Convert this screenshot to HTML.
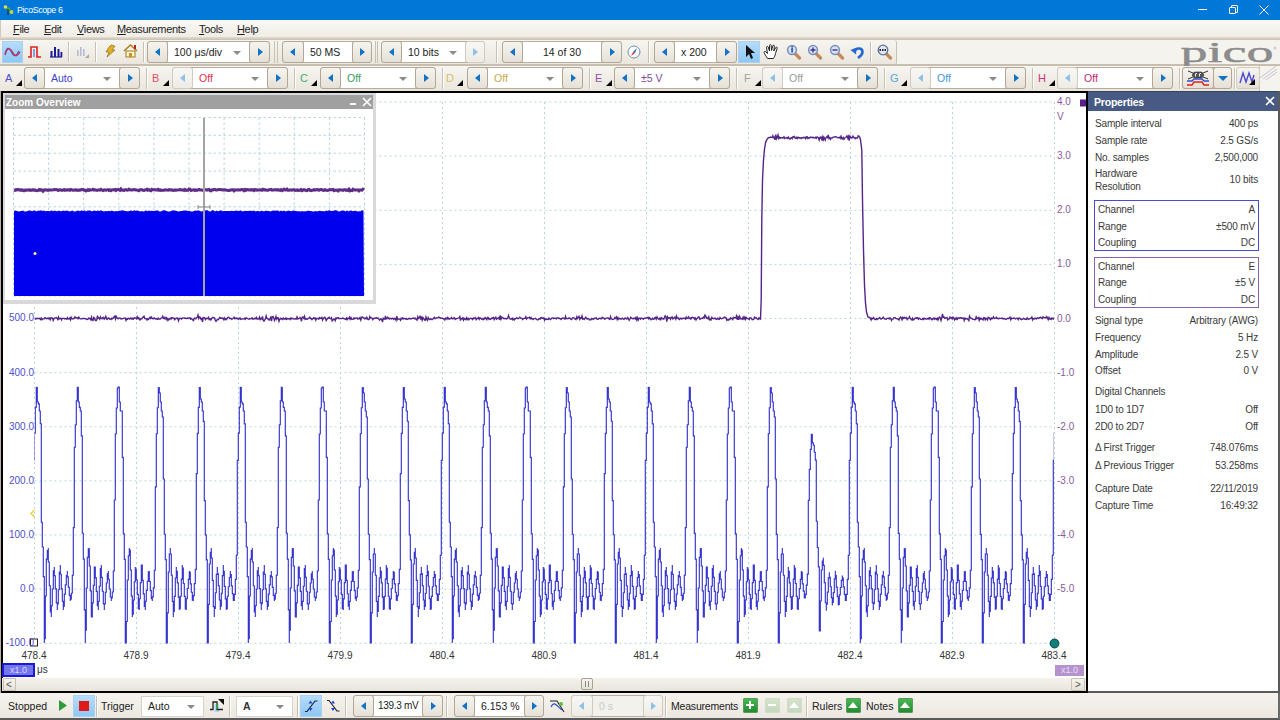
<!DOCTYPE html><html><head><meta charset="utf-8"><style>
*{box-sizing:border-box;margin:0;padding:0}
body{width:1280px;height:720px;overflow:hidden;position:relative;background:#F5F3EE;font-family:"Liberation Sans", sans-serif;font-size:10px;color:#222}
div,span,i{position:absolute;display:block}
.tb{background:linear-gradient(#F7F5F0,#EAE6DD)}
.grp{border:1px solid #B2A694;border-radius:4px;background:#EDE9E1}
.btn{border:1px solid #B2A694;border-radius:3px;background:linear-gradient(#F6F4EF,#E6E1D7)}
.btn.dis{background:linear-gradient(#F8F7F4,#EFECE6);border-color:#D2CABD}
.box{background:#fff;border-top:1px solid #B9AE9D;border-bottom:1px solid #B9AE9D;padding-left:6px;line-height:20px;font-size:10.5px;white-space:nowrap}
.al{left:50%;top:50%;margin-left:-3px;margin-top:-4px;width:0;height:0;border-top:4px solid transparent;border-bottom:4px solid transparent;border-right:5px solid #1173C5}
.ar{left:50%;top:50%;margin-left:-2px;margin-top:-4px;width:0;height:0;border-top:4px solid transparent;border-bottom:4px solid transparent;border-left:5px solid #1173C5}
.dis .al{border-right-color:#8FC0E6}
.dis .ar{border-left-color:#8FC0E6}
.dd{right:8px;top:9px;width:0;height:0;border-left:4.5px solid transparent;border-right:4.5px solid transparent;border-top:4.5px solid #8A8A8A}
.vsep{width:2px;border-left:1px solid #C9C0B2;border-right:1px solid #FFFFFF}
.mi{top:20px;line-height:18px;font-size:11px;color:#1E1E1E}
.mi u{text-decoration:underline}
.prow{left:1095px;width:163px;height:16px;line-height:16px;font-size:10px;color:#3A3A3A;letter-spacing:-0.15px}
.prow b{font-weight:normal;position:absolute;right:0;top:0}
.lab{font-size:10px;color:#5050C8}
.ylab{font-size:10px;color:#8A5A9A;left:1057px}
</style></head><body>
<div style="left:0;top:0;width:1280px;height:20px;background:#0078D7"></div>
<svg style="position:absolute;left:3px;top:4px" width="12" height="12"><circle cx="2.5" cy="3" r="1.8" fill="#f5e04a"/><circle cx="5.5" cy="5" r="1.8" fill="#44aa44"/><circle cx="8.5" cy="8" r="2" fill="#c8d040"/><rect x="4.5" y="5" width="1" height="6" fill="#222"/></svg>
<div style="left:17px;top:3px;font-size:8.8px;color:#fff;line-height:14px;letter-spacing:-0.35px">PicoScope 6</div>
<div style="left:1198px;top:9px;width:9px;height:1px;background:#fff"></div>
<div style="left:1231px;top:5px;width:7px;height:8px;border:1px solid #fff;border-radius:1px"></div><div style="left:1229px;top:7px;width:7px;height:7px;border:1px solid #fff;background:#0078D7;border-radius:1px"></div>
<svg style="position:absolute;left:1259px;top:5px" width="10" height="10"><path d="M0.5,0.5 L9.5,9.5 M9.5,0.5 L0.5,9.5" stroke="#fff" stroke-width="1"/></svg>
<div style="left:0;top:20px;width:1280px;height:18px;background:linear-gradient(#FAF8F4,#EFECE5);border-left:1px solid #CFC8BC"></div>
<div style="left:0;top:37px;width:1280px;height:3px;background:linear-gradient(#E2DCD2,#C9BFB1)"></div>
<div class="mi" style="left:13px;letter-spacing:-0.35px"><u>F</u>ile</div>
<div class="mi" style="left:44px;letter-spacing:-0.35px"><u>E</u>dit</div>
<div class="mi" style="left:77px;letter-spacing:-0.35px"><u>V</u>iews</div>
<div class="mi" style="left:117px;letter-spacing:-0.35px"><u>M</u>easurements</div>
<div class="mi" style="left:199px;letter-spacing:-0.35px"><u>T</u>ools</div>
<div class="mi" style="left:237px;letter-spacing:-0.35px"><u>H</u>elp</div>
<div class="tb" style="left:0;top:40px;width:897px;height:25px;border-right:1px solid #C9C0B2;border-radius:0 3px 3px 0"></div>
<div style="left:0;top:64px;width:1280px;height:2px;background:#C8BEB0"></div>
<div style="left:2px;top:41px;width:21px;height:22px;background:linear-gradient(#B5DCFB,#8EC8F5);border:1px solid #A9D2F2"></div>
<svg style="position:absolute;left:4px;top:46px" width="17" height="12"><path d="M1,8 C3,1 5,1 7.5,6 C10,11 12,11 15,5" stroke="#4848C8" stroke-width="1.3" fill="none"/><path d="M1,9 C3,2 6,1 8.5,6 C11,11 13,11 16,6" stroke="#D83050" stroke-width="1.3" fill="none"/></svg>
<svg style="position:absolute;left:27px;top:46px" width="15" height="12"><path d="M1,11 L4,11 L4,1 L10,1 L10,11 L14,11" stroke="#E02020" stroke-width="1.6" fill="none"/><rect x="6" y="3" width="2" height="8" fill="#80A0E0"/></svg>
<svg style="position:absolute;left:49px;top:45px" width="14" height="13"><path d="M1,12 H13" stroke="#1a1a9a" stroke-width="1.2"/><rect x="1.5" y="6" width="2" height="6" fill="#1a1a9a"/><rect x="5" y="2" width="2" height="10" fill="#1a1a9a"/><rect x="8.5" y="4" width="2" height="8" fill="#1a1a9a"/><rect x="11.5" y="7" width="1.8" height="5" fill="#1a1a9a"/></svg>
<div class="vsep" style="left:68px;top:42px;height:20px"></div>
<svg style="position:absolute;left:76px;top:45px" width="14" height="14"><rect x="1" y="5" width="1.6" height="6" fill="#B8B8D8"/><rect x="4" y="2" width="1.6" height="9" fill="#B8B8D8"/><rect x="7" y="4" width="1.6" height="7" fill="#B8B8D8"/><path d="M13,9 L13,13 L9,13Z" fill="#A8A8A8"/></svg>
<div class="vsep" style="left:95px;top:42px;height:20px"></div>
<svg style="position:absolute;left:104px;top:44px" width="12" height="14"><path d="M7,1 L11,2 L8,6 L11,6 L3,13 L5,8 L2,8 L5,3Z" fill="#E0B020" stroke="#806010" stroke-width="0.6"/></svg>
<svg style="position:absolute;left:123px;top:44px" width="15" height="14"><path d="M1,7 L7.5,1 L14,7" stroke="#B08020" stroke-width="1.6" fill="none"/><rect x="3" y="7" width="9" height="6" fill="#FFF6D0" stroke="#A07820" stroke-width="1"/><rect x="6" y="9" width="3" height="4" fill="#D09020"/><rect x="11" y="1" width="2" height="4" fill="#C02020"/></svg>
<div class="vsep" style="left:143px;top:42px;height:20px"></div>
<div class="grp" style="left:147px;top:41px;width:123px;height:22px"></div><div class="btn" style="left:147px;top:41px;width:21px;height:22px"><i class="al"></i></div><div class="box" style="left:168px;top:41px;width:81px;height:22px;color:#222;">100 μs/div<i class="dd"></i></div><div class="btn" style="left:249px;top:41px;width:21px;height:22px"><i class="ar"></i></div>
<div style="left:274px;top:41px;width:4px;height:22px;border-left:1px solid #C9C0B2;border-right:1px solid #C9C0B2"></div>
<div class="grp" style="left:282px;top:41px;width:90px;height:22px"></div><div class="btn" style="left:282px;top:41px;width:22px;height:22px"><i class="al"></i></div><div class="box" style="left:304px;top:41px;width:48px;height:22px;color:#222;">50 MS</div><div class="btn" style="left:352px;top:41px;width:20px;height:22px"><i class="ar"></i></div>
<div style="left:375px;top:41px;width:3px;height:22px;border-left:1px solid #C9C0B2;border-right:1px solid #C9C0B2"></div>
<div class="grp" style="left:381px;top:41px;width:104px;height:22px"></div><div class="btn" style="left:381px;top:41px;width:21px;height:22px"><i class="al"></i></div><div class="box" style="left:402px;top:41px;width:63px;height:22px;color:#222;">10 bits<i class="dd"></i></div><div class="btn dis" style="left:465px;top:41px;width:20px;height:22px"><i class="ar"></i></div>
<div class="vsep" style="left:496px;top:41px;height:22px"></div>
<div class="grp" style="left:502px;top:41px;width:120px;height:22px"></div><div class="btn" style="left:502px;top:41px;width:21px;height:22px"><i class="al"></i></div><div class="box" style="left:523px;top:41px;width:78px;height:22px;color:#222;text-align:center;padding-left:0;">14 of 30</div><div class="btn" style="left:601px;top:41px;width:21px;height:22px"><i class="ar"></i></div>
<svg style="position:absolute;left:627px;top:45px" width="14" height="14"><circle cx="7" cy="7" r="6" fill="#fff" stroke="#7090B0" stroke-width="1"/><path d="M10,3 L6,7 L8,8Z" fill="#2060D0"/><path d="M4,11 L6,7 L8,8Z" fill="#E03030"/></svg>
<div class="vsep" style="left:648px;top:41px;height:22px"></div>
<div class="grp" style="left:654px;top:41px;width:83px;height:22px"></div><div class="btn" style="left:654px;top:41px;width:21px;height:22px"><i class="al"></i></div><div class="box" style="left:675px;top:41px;width:41px;height:22px;color:#222;">x 200</div><div class="btn" style="left:716px;top:41px;width:21px;height:22px"><i class="ar"></i></div>
<div style="left:738px;top:41px;width:22px;height:22px;background:linear-gradient(#B5DCFB,#8EC8F5);border:1px solid #A9D2F2"></div>
<svg style="position:absolute;left:744px;top:44px" width="12" height="16"><path d="M2,1 L2,13 L5,10 L7,15 L9,14 L7,9 L11,9Z" fill="#111"/></svg>
<svg style="position:absolute;left:763px;top:43px" width="17" height="17"><path d="M4.5,15.5 C3,13 1.5,11 1,9.5 C0.8,8.5 2,8 3,9 L4.5,10.5 L3.5,4.5 C3.3,3.5 4.8,3 5.2,4 L6.5,8 L6.5,2.5 C6.5,1.3 8.2,1.3 8.2,2.5 L8.5,7.5 L9.8,2.8 C10.1,1.8 11.6,2 11.4,3.2 L10.8,8 L12.8,4.5 C13.3,3.6 14.6,4.1 14.2,5.2 L12.5,10.5 C12,13 11,14.5 10.5,15.5Z" stroke="#222" stroke-width="1" fill="#fff" stroke-linejoin="round"/></svg>
<svg style="position:absolute;left:786px;top:44px" width="16" height="16"><path d="M9,9.5 L13.5,14" stroke="#C48A5C" stroke-width="3.2" stroke-linecap="round"/><circle cx="6" cy="6" r="4.4" fill="#D8E2F0" stroke="#7890B8" stroke-width="1.5"/><rect x="5.3" y="4" width="1.6" height="4.5" fill="#2050B0"/><circle cx="6.1" cy="2.8" r="0.9" fill="#2050B0"/></svg>
<svg style="position:absolute;left:807px;top:44px" width="16" height="16"><path d="M9,9.5 L13.5,14" stroke="#C48A5C" stroke-width="3.2" stroke-linecap="round"/><circle cx="6" cy="6" r="4.4" fill="#D8E2F0" stroke="#7890B8" stroke-width="1.5"/><path d="M3.5,6 H8.5 M6,3.5 V8.5" stroke="#4030A0" stroke-width="1.4"/></svg>
<svg style="position:absolute;left:829px;top:44px" width="16" height="16"><path d="M9,9.5 L13.5,14" stroke="#C48A5C" stroke-width="3.2" stroke-linecap="round"/><circle cx="6" cy="6" r="4.4" fill="#D8E2F0" stroke="#7890B8" stroke-width="1.5"/><path d="M3.5,6 H8.5" stroke="#4030A0" stroke-width="1.4"/></svg>
<svg style="position:absolute;left:850px;top:45px" width="15" height="14"><path d="M4.5,6.5 C6,2.5 12.5,2.5 12.5,7 C12.5,10 10,11.5 8,13" stroke="#2468D8" stroke-width="2.6" fill="none"/><path d="M0.5,5 L6.5,2.5 L6,9.5Z" fill="#2468D8"/></svg>
<div class="vsep" style="left:870px;top:42px;height:20px"></div>
<svg style="position:absolute;left:877px;top:44px" width="16" height="16"><path d="M9,9.5 L13.5,14" stroke="#C48A5C" stroke-width="3.2" stroke-linecap="round"/><circle cx="6" cy="6" r="4.8" fill="#DCE8F8" stroke="#5A7090" stroke-width="1.3"/><path d="M2.5,6 H9.5" stroke="#223" stroke-width="2" stroke-dasharray="1.5,1"/></svg>
<svg style="position:absolute;left:1170px;top:36px" width="110" height="32"><text x="10.5" y="25.5" font-family="Liberation Serif" font-size="29" fill="#8C8C8C" stroke="#8C8C8C" stroke-width="0.45" textLength="93" lengthAdjust="spacingAndGlyphs">pico</text><circle cx="105" cy="12" r="1.5" fill="#ccc"/></svg>
<svg style="position:absolute;left:1258px;top:64px" width="20" height="18"><path d="M2,14 L18,2 M5,15 L19,5 M8,16 L19,8" stroke="#B8B8C8" stroke-width="0.8"/></svg>
<div class="tb" style="left:0;top:66px;width:1260px;height:25px;border-right:1px solid #C9C0B2"></div>
<div style="left:5px;top:71px;font-size:11px;color:#5050D0;line-height:14px">A</div>
<svg style="position:absolute;left:16px;top:80px" width="6" height="6"><path d="M6,0 L6,6 L0,6Z" fill="#000"/></svg>
<div class="grp" style="left:24px;top:67px;width:116px;height:22px"></div><div class="btn" style="left:24px;top:67px;width:21px;height:22px"><i class="al"></i></div><div class="box" style="left:45px;top:67px;width:74px;height:22px;color:#4040C0;">Auto<i class="dd"></i></div><div class="btn" style="left:119px;top:67px;width:21px;height:22px"><i class="ar"></i></div>
<div class="vsep" style="left:146px;top:68px;height:21px"></div>
<div style="left:152px;top:71px;font-size:11px;color:#E05060;line-height:14px">B</div>
<svg style="position:absolute;left:163px;top:80px" width="6" height="6"><path d="M6,0 L6,6 L0,6Z" fill="#000"/></svg>
<div class="grp" style="left:172px;top:67px;width:116px;height:22px"></div><div class="btn dis" style="left:172px;top:67px;width:21px;height:22px"><i class="al"></i></div><div class="box" style="left:193px;top:67px;width:74px;height:22px;color:#E03050;">Off<i class="dd"></i></div><div class="btn" style="left:267px;top:67px;width:21px;height:22px"><i class="ar"></i></div>
<div class="vsep" style="left:294px;top:68px;height:21px"></div>
<div style="left:300px;top:71px;font-size:11px;color:#40B070;line-height:14px">C</div>
<svg style="position:absolute;left:311px;top:80px" width="6" height="6"><path d="M6,0 L6,6 L0,6Z" fill="#000"/></svg>
<div class="grp" style="left:320px;top:67px;width:116px;height:22px"></div><div class="btn" style="left:320px;top:67px;width:21px;height:22px"><i class="al"></i></div><div class="box" style="left:341px;top:67px;width:74px;height:22px;color:#30A060;">Off<i class="dd"></i></div><div class="btn" style="left:415px;top:67px;width:21px;height:22px"><i class="ar"></i></div>
<div class="vsep" style="left:442px;top:68px;height:21px"></div>
<div style="left:446px;top:71px;font-size:11px;color:#D8C060;line-height:14px">D</div>
<svg style="position:absolute;left:457px;top:80px" width="6" height="6"><path d="M6,0 L6,6 L0,6Z" fill="#000"/></svg>
<div class="grp" style="left:467px;top:67px;width:116px;height:22px"></div><div class="btn" style="left:467px;top:67px;width:21px;height:22px"><i class="al"></i></div><div class="box" style="left:488px;top:67px;width:74px;height:22px;color:#C8A850;">Off<i class="dd"></i></div><div class="btn" style="left:562px;top:67px;width:21px;height:22px"><i class="ar"></i></div>
<div class="vsep" style="left:589px;top:68px;height:21px"></div>
<div style="left:595px;top:71px;font-size:11px;color:#9050B0;line-height:14px">E</div>
<svg style="position:absolute;left:606px;top:80px" width="6" height="6"><path d="M6,0 L6,6 L0,6Z" fill="#000"/></svg>
<div class="grp" style="left:614px;top:67px;width:116px;height:22px"></div><div class="btn" style="left:614px;top:67px;width:21px;height:22px"><i class="al"></i></div><div class="box" style="left:635px;top:67px;width:74px;height:22px;color:#7A4A9A;">±5 V<i class="dd"></i></div><div class="btn" style="left:709px;top:67px;width:21px;height:22px"><i class="ar"></i></div>
<div class="vsep" style="left:736px;top:68px;height:21px"></div>
<div style="left:744px;top:71px;font-size:11px;color:#A0A0A0;line-height:14px">F</div>
<svg style="position:absolute;left:755px;top:80px" width="6" height="6"><path d="M6,0 L6,6 L0,6Z" fill="#000"/></svg>
<div class="grp" style="left:762px;top:67px;width:116px;height:22px"></div><div class="btn dis" style="left:762px;top:67px;width:21px;height:22px"><i class="al"></i></div><div class="box" style="left:783px;top:67px;width:74px;height:22px;color:#9A9A9A;">Off<i class="dd"></i></div><div class="btn" style="left:857px;top:67px;width:21px;height:22px"><i class="ar"></i></div>
<div class="vsep" style="left:884px;top:68px;height:21px"></div>
<div style="left:890px;top:71px;font-size:11px;color:#50A8E0;line-height:14px">G</div>
<svg style="position:absolute;left:901px;top:80px" width="6" height="6"><path d="M6,0 L6,6 L0,6Z" fill="#000"/></svg>
<div class="grp" style="left:910px;top:67px;width:116px;height:22px"></div><div class="btn dis" style="left:910px;top:67px;width:21px;height:22px"><i class="al"></i></div><div class="box" style="left:931px;top:67px;width:74px;height:22px;color:#4098D8;">Off<i class="dd"></i></div><div class="btn" style="left:1005px;top:67px;width:21px;height:22px"><i class="ar"></i></div>
<div class="vsep" style="left:1032px;top:68px;height:21px"></div>
<div style="left:1038px;top:71px;font-size:11px;color:#D03080;line-height:14px">H</div>
<svg style="position:absolute;left:1049px;top:80px" width="6" height="6"><path d="M6,0 L6,6 L0,6Z" fill="#000"/></svg>
<div class="grp" style="left:1057px;top:67px;width:116px;height:22px"></div><div class="btn dis" style="left:1057px;top:67px;width:21px;height:22px"><i class="al"></i></div><div class="box" style="left:1078px;top:67px;width:74px;height:22px;color:#C02870;">Off<i class="dd"></i></div><div class="btn" style="left:1152px;top:67px;width:21px;height:22px"><i class="ar"></i></div>
<div class="vsep" style="left:1179px;top:68px;height:21px"></div>
<div class="grp" style="left:1182px;top:67px;width:50px;height:22px"></div>
<div class="btn" style="left:1182px;top:67px;width:32px;height:22px"></div>
<div class="btn" style="left:1213px;top:67px;width:19px;height:22px"><i style="left:4px;top:8px;width:0;height:0;border-left:5px solid transparent;border-right:5px solid transparent;border-top:5px solid #1173C5"></i></div>
<svg style="position:absolute;left:1186px;top:70px" width="25" height="16"><path d="M2,1 L22,9 M22,1 L2,9" stroke="#333" stroke-width="1"/><path d="M6,5 L8.5,2 L15.5,2 L18,5 L15.5,8 L8.5,8Z" fill="#555" stroke="#222" stroke-width="0.6"/><path d="M9.5,3.5 V6.5 M10,3.5 H11 M13.5,3.5 V6.5 M14,3.5 H15" stroke="#fff" stroke-width="0.9"/><path d="M1,11 L6,11 L8,9 L16,9 L18,11 L23,11" stroke="#3050D0" stroke-width="1.4" fill="none"/><path d="M1,15 L6,15 L8,12 L16,12 L18,15 L23,15" stroke="#E02020" stroke-width="1.4" fill="none"/></svg>
<div class="vsep" style="left:1234px;top:68px;height:21px"></div>
<div class="btn" style="left:1236px;top:67px;width:24px;height:22px;border-color:#D2CABD"></div>
<svg style="position:absolute;left:1239px;top:71px" width="18" height="15"><path d="M1,12 L4,2 L7,11 L10,2 L13,11 L15,4" stroke="#4A4ACF" stroke-width="1.4" fill="none"/><path d="M16,8 L16,14 L10,14Z" fill="#000"/></svg>
<div style="left:0;top:91px;width:1088px;height:602px;background:#000;border-left:1px solid #B8B0A4"></div>
<div style="left:3px;top:93px;width:1083px;height:598px;background:#fff"></div>
<div style="left:2px;top:678px;width:1084px;height:13px;background:linear-gradient(#F4F2EC,#E9E5DC)"></div>
<div class="btn" style="left:3px;top:678px;width:13px;height:13px;border-color:#C9C0B2;border-radius:1px"></div><div style="left:6px;top:678px;font-size:10px;color:#555;line-height:13px">&lt;</div>
<div class="btn" style="left:1071px;top:678px;width:14px;height:13px;border-color:#C9C0B2;border-radius:1px"></div><div style="left:1075px;top:678px;font-size:10px;color:#555;line-height:13px">&gt;</div>
<div class="btn" style="left:581px;top:678px;width:12px;height:12px;border-color:#A9A090;border-radius:2px"></div><div style="left:585px;top:681px;width:4px;height:6px;border-left:1px solid #888;border-right:1px solid #888"></div>
<svg style="position:absolute;left:0;top:0" width="1088" height="692">
<defs><clipPath id="pc"><rect x="34.5" y="95" width="1019.5" height="549"/></clipPath></defs>
<path d="M34.5,102 V643.3 M136.5,102 V643.3 M238.5,102 V643.3 M340.5,102 V643.3 M442.5,102 V643.3 M544.5,102 V643.3 M646.5,102 V643.3 M748.5,102 V643.3 M850.5,102 V643.3 M952.5,102 V643.3 M1054.5,102 V643.3 M34.5,102.0 H1054.5 M34.5,156.1 H1054.5 M34.5,210.3 H1054.5 M34.5,264.4 H1054.5 M34.5,318.5 H1054.5 M34.5,372.7 H1054.5 M34.5,426.8 H1054.5 M34.5,480.9 H1054.5 M34.5,535.0 H1054.5 M34.5,589.2 H1054.5 M34.5,643.3 H1054.5" stroke="#B9D5DC" stroke-width="1" stroke-dasharray="2,3" fill="none"/>
<g clip-path="url(#pc)">
<path d="M30.3,600.4 V600.4 V594.4 V594.4 H31.3 V594.4 V579.4 V579.4 H32.3 V579.4 V555.2 V555.2 H33.3 V555.2 V460.4 V460.4 H34.3 V460.4 V433.1 V433.1 H35.3 V433.1 V407.1 V407.1 H36.3 V407.1 V387.4 V387.4 H37.3 V387.0 V402.0 V402.0 H38.3 V402.0 V403.8 V403.8 H39.3 V403.8 V411.0 V411.0 H40.3 V411.0 V423.7 V423.7 H41.3 V423.7 V522.2 V522.2 H42.3 V522.2 V547.0 V547.0 H43.3 V547.0 V576.6 V576.6 H44.3 V576.6 V643.0 V638.7 H45.3 V638.7 V596.0 V596.0 H46.3 V596.0 V559.1 V559.1 H47.3 V559.1 V550.6 V550.6 H48.3 V548.0 V562.0 V562.0 H49.3 V562.0 V585.7 V585.7 H50.3 V585.7 V611.8 V611.8 H51.3 V617.0 V605.7 V605.7 H52.3 V605.7 V589.0 V589.0 H53.3 V589.0 V570.7 V570.7 H54.3 V567.0 V575.7 V575.7 H55.3 V575.7 V588.6 V588.6 H56.3 V588.6 V602.9 V602.9 H57.3 V602.9 V610.0 V603.8 H58.3 V603.8 V589.7 V589.7 H59.3 V589.7 V572.1 V572.1 H60.3 V565.0 V574.2 V574.2 H61.3 V574.2 V588.8 V588.8 H62.3 V588.8 V601.2 V601.2 H63.3 V601.2 V610.0 V606.2 H64.3 V606.2 V594.1 V594.1 H65.3 V594.1 V584.8 V584.8 H66.3 V584.8 V575.6 V575.6 H67.3 V571.0 V576.8 V576.8 H68.3 V576.8 V587.4 V587.4 H69.3 V587.4 V595.4 V595.4 H70.3 V595.4 V601.0 V599.2 H71.3 V599.2 V593.2 V593.2 H72.3 V593.2 V575.2 V575.2 H73.3 V575.2 V527.6 V527.6 H74.3 V527.6 V447.2 V447.2 H75.3 V447.2 V424.7 V424.7 H76.3 V424.7 V400.7 V400.7 H77.3 V400.7 V387.2 V387.2 H78.3 V387.0 V402.0 V402.0 H79.3 V402.0 V407.4 V407.4 H80.3 V407.4 V411.0 V411.0 H81.3 V411.0 V435.8 V435.8 H82.3 V435.8 V533.2 V533.2 H83.3 V533.2 V559.1 V559.1 H84.3 V559.1 V609.8 V609.8 H85.3 V609.8 V643.0 V630.1 H86.3 V630.1 V588.0 V588.0 H87.3 V588.0 V557.4 V557.4 H88.3 V557.4 V548.9 V548.9 H89.3 V548.0 V566.0 V566.0 H90.3 V566.0 V590.9 V590.9 H91.3 V590.9 V617.0 V617.0 H92.3 V617.0 V602.8 V602.8 H93.3 V602.8 V585.3 V585.3 H94.3 V585.3 V567.0 V567.0 H95.3 V567.0 V577.8 V577.8 H96.3 V577.8 V591.4 V591.4 H97.3 V591.4 V605.7 V605.7 H98.3 V610.0 V601.2 V601.2 H99.3 V601.2 V586.2 V586.2 H100.3 V586.2 V568.5 V568.5 H101.3 V565.0 V577.3 V577.3 H102.3 V577.3 V591.2 V591.2 H103.3 V591.2 V603.8 V603.8 H104.3 V610.0 V603.8 V603.8 H105.3 V603.8 V592.2 V592.2 H106.3 V592.2 V583.0 V583.0 H107.3 V583.0 V573.8 V573.8 H108.3 V571.0 V579.2 V579.2 H109.3 V579.2 V589.0 V589.0 H110.3 V589.0 V597.0 V597.0 H111.3 V597.0 V601.0 V598.0 H112.3 V598.0 V592.0 V592.0 H113.3 V592.0 V571.0 V571.0 H114.3 V571.0 V500.0 V500.0 H115.3 V500.0 V434.0 V434.0 H116.3 V434.0 V408.0 V408.0 H117.3 V408.0 V388.0 V388.0 H118.3 V388.0 V387.0 V387.0 H119.3 V387.0 V402.0 V402.0 H120.3 V402.0 V411.0 V411.0 H121.3 V411.0 V411.0 V411.0 H122.3 V411.0 V457.4 V457.4 H123.3 V457.4 V533.8 V533.8 H124.3 V533.8 V559.4 V559.4 H125.3 V559.4 V643.0 V643.0 H126.3 V643.0 V621.5 V621.5 H127.3 V621.5 V580.0 V580.0 H128.3 V580.0 V555.7 V555.7 H129.3 V555.7 V548.0 V550.0 H130.3 V550.0 V570.0 V570.0 H131.3 V570.0 V596.1 V596.1 H132.3 V596.1 V617.0 V614.2 H133.3 V614.2 V600.0 V600.0 H134.3 V600.0 V581.7 V581.7 H135.3 V581.7 V567.0 V569.2 H136.3 V569.2 V580.0 V580.0 H137.3 V580.0 V594.3 V594.3 H138.3 V594.3 V608.6 V608.6 H139.3 V610.0 V598.7 V598.7 H140.3 V598.7 V582.6 V582.6 H141.3 V582.6 V565.0 V565.0 H142.3 V565.0 V580.4 V580.4 H143.3 V580.4 V593.8 V593.8 H144.3 V593.8 V606.3 V606.3 H145.3 V610.0 V601.2 V601.2 H146.3 V601.2 V590.4 V590.4 H147.3 V590.4 V581.2 V581.2 H148.3 V581.2 V571.9 V571.9 H149.3 V571.0 V581.5 V581.5 H150.3 V581.5 V590.6 V590.6 H151.3 V590.6 V598.6 V598.6 H152.3 V601.0 V596.8 V596.8 H153.3 V596.8 V587.8 V587.8 H154.3 V587.8 V570.2 V570.2 H155.3 V570.2 V486.8 V486.8 H156.3 V486.8 V433.7 V433.7 H157.3 V433.7 V407.7 V407.7 H158.3 V407.7 V387.8 V387.8 H159.3 V387.0 V393.0 V393.0 H160.3 V393.0 V402.0 V402.0 H161.3 V402.0 V411.0 V411.0 H162.3 V411.0 V417.0 V417.0 H163.3 V417.0 V479.0 V479.0 H164.3 V479.0 V534.2 V534.2 H165.3 V534.2 V559.6 V559.6 H166.3 V559.6 V643.0 V643.0 H167.3 V643.0 V612.9 V612.9 H168.3 V612.9 V572.0 V572.0 H169.3 V572.0 V554.0 V554.0 H170.3 V548.0 V554.0 V554.0 H171.3 V554.0 V575.2 V575.2 H172.3 V575.2 V601.3 V601.3 H173.3 V601.3 V617.0 V611.3 H174.3 V611.3 V596.3 V596.3 H175.3 V596.3 V578.0 V578.0 H176.3 V578.0 V567.0 V571.3 H177.3 V571.3 V582.9 V582.9 H178.3 V582.9 V597.1 V597.1 H179.3 V597.1 V610.0 V608.7 H180.3 V608.7 V596.2 V596.2 H181.3 V596.2 V579.1 V579.1 H182.3 V579.1 V565.0 V568.1 H183.3 V568.1 V583.5 V583.5 H184.3 V583.5 V596.3 V596.3 H185.3 V596.3 V608.8 V608.8 H186.3 V610.0 V598.7 V598.7 H187.3 V598.7 V588.5 V588.5 H188.3 V588.5 V579.3 V579.3 H189.3 V579.3 V571.0 V572.2 H190.3 V572.2 V583.8 V583.8 H191.3 V583.8 V592.2 V592.2 H192.3 V592.2 V600.2 V600.2 H193.3 V601.0 V595.6 V595.6 H194.3 V595.6 V583.6 V583.6 H195.3 V583.6 V569.4 V569.4 H196.3 V569.4 V473.6 V473.6 H197.3 V473.6 V433.4 V433.4 H198.3 V433.4 V407.4 V407.4 H199.3 V407.4 V387.6 V387.6 H200.3 V387.0 V399.0 V399.0 H201.3 V399.0 V402.0 V402.0 H202.3 V402.0 V411.0 V411.0 H203.3 V411.0 V421.3 V421.3 H204.3 V421.3 V500.6 V500.6 H205.3 V500.6 V534.8 V534.8 H206.3 V534.8 V559.9 V559.9 H207.3 V559.9 V643.0 V643.0 H208.3 V643.0 V604.3 V604.3 H209.3 V604.3 V564.0 V564.0 H210.3 V564.0 V552.3 V552.3 H211.3 V548.0 V558.0 V558.0 H212.3 V558.0 V580.4 V580.4 H213.3 V580.4 V606.6 V606.6 H214.3 V606.6 V617.0 V608.5 H215.3 V608.5 V592.7 V592.7 H216.3 V592.7 V574.3 V574.3 H217.3 V574.3 V567.0 V573.5 H218.3 V573.5 V585.7 V585.7 H219.3 V585.7 V600.0 V600.0 H220.3 V600.0 V610.0 V606.2 H221.3 V606.2 V593.2 V593.2 H222.3 V593.2 V575.6 V575.6 H223.3 V575.6 V565.0 V571.2 H224.3 V571.2 V586.3 V586.3 H225.3 V586.3 V598.8 V598.8 H226.3 V598.8 V610.0 V608.7 H227.3 V608.7 V596.2 V596.2 H228.3 V596.2 V586.7 V586.7 H229.3 V586.7 V577.5 V577.5 H230.3 V577.5 V571.0 V574.5 H231.3 V574.5 V585.8 V585.8 H232.3 V585.8 V593.8 V593.8 H233.3 V593.8 V601.0 V600.4 H234.3 V600.4 V594.4 V594.4 H235.3 V594.4 V579.4 V579.4 H236.3 V579.4 V555.2 V555.2 H237.3 V555.2 V460.4 V460.4 H238.3 V460.4 V433.1 V433.1 H239.3 V433.1 V407.1 V407.1 H240.3 V407.1 V387.4 V387.4 H241.3 V387.0 V402.0 V402.0 H242.3 V402.0 V403.8 V403.8 H243.3 V403.8 V411.0 V411.0 H244.3 V411.0 V423.8 V423.8 H245.3 V423.8 V522.2 V522.2 H246.3 V522.2 V547.0 V547.0 H247.3 V547.0 V576.6 V576.6 H248.3 V576.6 V643.0 V638.7 H249.3 V638.7 V596.0 V596.0 H250.3 V596.0 V559.1 V559.1 H251.3 V559.1 V550.6 V550.6 H252.3 V548.0 V562.0 V562.0 H253.3 V562.0 V585.7 V585.7 H254.3 V585.7 V611.8 V611.8 H255.3 V617.0 V605.7 V605.7 H256.3 V605.7 V589.0 V589.0 H257.3 V589.0 V570.7 V570.7 H258.3 V567.0 V575.7 V575.7 H259.3 V575.7 V588.6 V588.6 H260.3 V588.6 V602.9 V602.9 H261.3 V602.9 V610.0 V603.7 H262.3 V603.7 V589.7 V589.7 H263.3 V589.7 V572.1 V572.1 H264.3 V565.0 V574.2 V574.2 H265.3 V574.2 V588.8 V588.8 H266.3 V588.8 V601.3 V601.3 H267.3 V601.3 V610.0 V606.2 H268.3 V606.2 V594.1 V594.1 H269.3 V594.1 V584.8 V584.8 H270.3 V584.8 V575.6 V575.6 H271.3 V571.0 V576.8 V576.8 H272.3 V576.8 V587.4 V587.4 H273.3 V587.4 V595.4 V595.4 H274.3 V595.4 V601.0 V599.2 H275.3 V599.2 V593.2 V593.2 H276.3 V593.2 V575.2 V575.2 H277.3 V575.2 V527.6 V527.6 H278.3 V527.6 V447.2 V447.2 H279.3 V447.2 V424.7 V424.7 H280.3 V424.7 V400.7 V400.7 H281.3 V400.7 V387.2 V387.2 H282.3 V387.0 V402.0 V402.0 H283.3 V402.0 V407.4 V407.4 H284.3 V407.4 V411.0 V411.0 H285.3 V411.0 V435.8 V435.8 H286.3 V435.8 V533.2 V533.2 H287.3 V533.2 V559.1 V559.1 H288.3 V559.1 V609.8 V609.8 H289.3 V609.8 V643.0 V630.1 H290.3 V630.1 V588.0 V588.0 H291.3 V588.0 V557.4 V557.4 H292.3 V557.4 V548.9 V548.9 H293.3 V548.0 V566.0 V566.0 H294.3 V566.0 V590.9 V590.9 H295.3 V590.9 V617.0 V617.0 H296.3 V617.0 V602.8 V602.8 H297.3 V602.8 V585.3 V585.3 H298.3 V585.3 V567.0 V567.0 H299.3 V567.0 V577.8 V577.8 H300.3 V577.8 V591.4 V591.4 H301.3 V591.4 V605.7 V605.7 H302.3 V610.0 V601.3 V601.3 H303.3 V601.3 V586.2 V586.2 H304.3 V586.2 V568.5 V568.5 H305.3 V565.0 V577.3 V577.3 H306.3 V577.3 V591.2 V591.2 H307.3 V591.2 V603.8 V603.8 H308.3 V610.0 V603.7 V603.7 H309.3 V603.7 V592.2 V592.2 H310.3 V592.2 V583.0 V583.0 H311.3 V583.0 V573.8 V573.8 H312.3 V571.0 V579.2 V579.2 H313.3 V579.2 V589.0 V589.0 H314.3 V589.0 V597.0 V597.0 H315.3 V597.0 V601.0 V598.0 H316.3 V598.0 V592.0 V592.0 H317.3 V592.0 V571.0 V571.0 H318.3 V571.0 V500.0 V500.0 H319.3 V500.0 V434.0 V434.0 H320.3 V434.0 V408.0 V408.0 H321.3 V408.0 V388.0 V388.0 H322.3 V388.0 V387.0 V387.0 H323.3 V387.0 V402.0 V402.0 H324.3 V402.0 V411.0 V411.0 H325.3 V411.0 V411.0 V411.0 H326.3 V411.0 V457.4 V457.4 H327.3 V457.4 V533.8 V533.8 H328.3 V533.8 V559.4 V559.4 H329.3 V559.4 V643.0 V643.0 H330.3 V643.0 V621.5 V621.5 H331.3 V621.5 V580.0 V580.0 H332.3 V580.0 V555.7 V555.7 H333.3 V555.7 V548.0 V550.0 H334.3 V550.0 V570.0 V570.0 H335.3 V570.0 V596.1 V596.1 H336.3 V596.1 V617.0 V614.2 H337.3 V614.2 V600.0 V600.0 H338.3 V600.0 V581.7 V581.7 H339.3 V581.7 V567.0 V569.2 H340.3 V569.2 V580.0 V580.0 H341.3 V580.0 V594.3 V594.3 H342.3 V594.3 V608.6 V608.6 H343.3 V610.0 V598.8 V598.8 H344.3 V598.8 V582.6 V582.6 H345.3 V582.6 V565.0 V565.0 H346.3 V565.0 V580.4 V580.4 H347.3 V580.4 V593.7 V593.7 H348.3 V593.7 V606.2 V606.2 H349.3 V610.0 V601.3 V601.3 H350.3 V601.3 V590.4 V590.4 H351.3 V590.4 V581.2 V581.2 H352.3 V581.2 V571.9 V571.9 H353.3 V571.0 V581.5 V581.5 H354.3 V581.5 V590.6 V590.6 H355.3 V590.6 V598.6 V598.6 H356.3 V601.0 V596.8 V596.8 H357.3 V596.8 V587.8 V587.8 H358.3 V587.8 V570.2 V570.2 H359.3 V570.2 V486.8 V486.8 H360.3 V486.8 V433.7 V433.7 H361.3 V433.7 V407.7 V407.7 H362.3 V407.7 V387.8 V387.8 H363.3 V387.0 V393.0 V393.0 H364.3 V393.0 V402.0 V402.0 H365.3 V402.0 V411.0 V411.0 H366.3 V411.0 V417.0 V417.0 H367.3 V417.0 V479.0 V479.0 H368.3 V479.0 V534.2 V534.2 H369.3 V534.2 V559.6 V559.6 H370.3 V559.6 V643.0 V643.0 H371.3 V643.0 V612.9 V612.9 H372.3 V612.9 V572.0 V572.0 H373.3 V572.0 V554.0 V554.0 H374.3 V548.0 V554.0 V554.0 H375.3 V554.0 V575.2 V575.2 H376.3 V575.2 V601.3 V601.3 H377.3 V601.3 V617.0 V611.3 H378.3 V611.3 V596.3 V596.3 H379.3 V596.3 V578.0 V578.0 H380.3 V578.0 V567.0 V571.3 H381.3 V571.3 V582.9 V582.9 H382.3 V582.9 V597.1 V597.1 H383.3 V597.1 V610.0 V608.8 H384.3 V608.8 V596.3 V596.3 H385.3 V596.3 V579.1 V579.1 H386.3 V579.1 V565.0 V568.1 H387.3 V568.1 V583.5 V583.5 H388.3 V583.5 V596.2 V596.2 H389.3 V596.2 V608.7 V608.7 H390.3 V610.0 V598.8 V598.8 H391.3 V598.8 V588.5 V588.5 H392.3 V588.5 V579.3 V579.3 H393.3 V579.3 V571.0 V572.2 H394.3 V572.2 V583.8 V583.8 H395.3 V583.8 V592.2 V592.2 H396.3 V592.2 V600.2 V600.2 H397.3 V601.0 V595.6 V595.6 H398.3 V595.6 V583.6 V583.6 H399.3 V583.6 V569.4 V569.4 H400.3 V569.4 V473.6 V473.6 H401.3 V473.6 V433.4 V433.4 H402.3 V433.4 V407.4 V407.4 H403.3 V407.4 V387.6 V387.6 H404.3 V387.0 V399.0 V399.0 H405.3 V399.0 V402.0 V402.0 H406.3 V402.0 V411.0 V411.0 H407.3 V411.0 V421.2 V421.2 H408.3 V421.2 V500.6 V500.6 H409.3 V500.6 V534.8 V534.8 H410.3 V534.8 V559.9 V559.9 H411.3 V559.9 V643.0 V643.0 H412.3 V643.0 V604.3 V604.3 H413.3 V604.3 V564.0 V564.0 H414.3 V564.0 V552.3 V552.3 H415.3 V548.0 V558.0 V558.0 H416.3 V558.0 V580.4 V580.4 H417.3 V580.4 V606.6 V606.6 H418.3 V606.6 V617.0 V608.5 H419.3 V608.5 V592.7 V592.7 H420.3 V592.7 V574.3 V574.3 H421.3 V574.3 V567.0 V573.5 H422.3 V573.5 V585.7 V585.7 H423.3 V585.7 V600.0 V600.0 H424.3 V600.0 V610.0 V606.3 H425.3 V606.3 V593.2 V593.2 H426.3 V593.2 V575.6 V575.6 H427.3 V575.6 V565.0 V571.2 H428.3 V571.2 V586.2 V586.2 H429.3 V586.2 V598.7 V598.7 H430.3 V598.7 V610.0 V608.8 H431.3 V608.8 V596.3 V596.3 H432.3 V596.3 V586.7 V586.7 H433.3 V586.7 V577.5 V577.5 H434.3 V577.5 V571.0 V574.5 H435.3 V574.5 V585.8 V585.8 H436.3 V585.8 V593.8 V593.8 H437.3 V593.8 V601.0 V600.4 H438.3 V600.4 V594.4 V594.4 H439.3 V594.4 V579.4 V579.4 H440.3 V579.4 V555.2 V555.2 H441.3 V555.2 V460.4 V460.4 H442.3 V460.4 V433.1 V433.1 H443.3 V433.1 V407.1 V407.1 H444.3 V407.1 V387.4 V387.4 H445.3 V387.0 V402.0 V402.0 H446.3 V402.0 V403.8 V403.8 H447.3 V403.8 V411.0 V411.0 H448.3 V411.0 V423.7 V423.7 H449.3 V423.7 V522.2 V522.2 H450.3 V522.2 V547.0 V547.0 H451.3 V547.0 V576.6 V576.6 H452.3 V576.6 V643.0 V638.7 H453.3 V638.7 V596.0 V596.0 H454.3 V596.0 V559.1 V559.1 H455.3 V559.1 V550.6 V550.6 H456.3 V548.0 V562.0 V562.0 H457.3 V562.0 V585.7 V585.7 H458.3 V585.7 V611.8 V611.8 H459.3 V617.0 V605.7 V605.7 H460.3 V605.7 V589.0 V589.0 H461.3 V589.0 V570.7 V570.7 H462.3 V567.0 V575.7 V575.7 H463.3 V575.7 V588.6 V588.6 H464.3 V588.6 V602.9 V602.9 H465.3 V602.9 V610.0 V603.8 H466.3 V603.8 V589.7 V589.7 H467.3 V589.7 V572.1 V572.1 H468.3 V565.0 V574.2 V574.2 H469.3 V574.2 V588.7 V588.7 H470.3 V588.7 V601.2 V601.2 H471.3 V601.2 V610.0 V606.3 H472.3 V606.3 V594.1 V594.1 H473.3 V594.1 V584.8 V584.8 H474.3 V584.8 V575.6 V575.6 H475.3 V571.0 V576.8 V576.8 H476.3 V576.8 V587.4 V587.4 H477.3 V587.4 V595.4 V595.4 H478.3 V595.4 V601.0 V599.2 H479.3 V599.2 V593.2 V593.2 H480.3 V593.2 V575.2 V575.2 H481.3 V575.2 V527.6 V527.6 H482.3 V527.6 V447.2 V447.2 H483.3 V447.2 V424.7 V424.7 H484.3 V424.7 V400.7 V400.7 H485.3 V400.7 V387.2 V387.2 H486.3 V387.0 V402.0 V402.0 H487.3 V402.0 V407.4 V407.4 H488.3 V407.4 V411.0 V411.0 H489.3 V411.0 V435.8 V435.8 H490.3 V435.8 V533.2 V533.2 H491.3 V533.2 V559.1 V559.1 H492.3 V559.1 V609.8 V609.8 H493.3 V609.8 V643.0 V630.1 H494.3 V630.1 V588.0 V588.0 H495.3 V588.0 V557.4 V557.4 H496.3 V557.4 V548.9 V548.9 H497.3 V548.0 V566.0 V566.0 H498.3 V566.0 V590.9 V590.9 H499.3 V590.9 V617.0 V617.0 H500.3 V617.0 V602.8 V602.8 H501.3 V602.8 V585.3 V585.3 H502.3 V585.3 V567.0 V567.0 H503.3 V567.0 V577.8 V577.8 H504.3 V577.8 V591.4 V591.4 H505.3 V591.4 V605.7 V605.7 H506.3 V610.0 V601.3 V601.3 H507.3 V601.3 V586.2 V586.2 H508.3 V586.2 V568.5 V568.5 H509.3 V565.0 V577.3 V577.3 H510.3 V577.3 V591.2 V591.2 H511.3 V591.2 V603.7 V603.7 H512.3 V603.7 V610.0 V603.8 H513.3 V603.8 V592.2 V592.2 H514.3 V592.2 V583.0 V583.0 H515.3 V583.0 V573.8 V573.8 H516.3 V571.0 V579.2 V579.2 H517.3 V579.2 V589.0 V589.0 H518.3 V589.0 V597.0 V597.0 H519.3 V597.0 V601.0 V598.0 H520.3 V598.0 V592.0 V592.0 H521.3 V592.0 V571.0 V571.0 H522.3 V571.0 V500.0 V500.0 H523.3 V500.0 V434.0 V434.0 H524.3 V434.0 V408.0 V408.0 H525.3 V408.0 V388.0 V388.0 H526.3 V388.0 V387.0 V387.0 H527.3 V387.0 V402.0 V402.0 H528.3 V402.0 V411.0 V411.0 H529.3 V411.0 V411.0 V411.0 H530.3 V411.0 V457.4 V457.4 H531.3 V457.4 V533.7 V533.7 H532.3 V533.7 V559.4 V559.4 H533.3 V559.4 V643.0 V643.0 H534.3 V643.0 V621.5 V621.5 H535.3 V621.5 V580.0 V580.0 H536.3 V580.0 V555.7 V555.7 H537.3 V555.7 V548.0 V550.0 H538.3 V550.0 V570.0 V570.0 H539.3 V570.0 V596.1 V596.1 H540.3 V596.1 V617.0 V614.2 H541.3 V614.2 V600.0 V600.0 H542.3 V600.0 V581.7 V581.7 H543.3 V581.7 V567.0 V569.2 H544.3 V569.2 V580.0 V580.0 H545.3 V580.0 V594.3 V594.3 H546.3 V594.3 V608.6 V608.6 H547.3 V610.0 V598.8 V598.8 H548.3 V598.8 V582.6 V582.6 H549.3 V582.6 V565.0 V565.0 H550.3 V565.0 V580.4 V580.4 H551.3 V580.4 V593.7 V593.7 H552.3 V593.7 V606.2 V606.2 H553.3 V610.0 V601.3 V601.3 H554.3 V601.3 V590.4 V590.4 H555.3 V590.4 V581.2 V581.2 H556.3 V581.2 V571.9 V571.9 H557.3 V571.0 V581.5 V581.5 H558.3 V581.5 V590.6 V590.6 H559.3 V590.6 V598.6 V598.6 H560.3 V601.0 V596.8 V596.8 H561.3 V596.8 V587.8 V587.8 H562.3 V587.8 V570.2 V570.2 H563.3 V570.2 V486.8 V486.8 H564.3 V486.8 V433.7 V433.7 H565.3 V433.7 V407.7 V407.7 H566.3 V407.7 V387.8 V387.8 H567.3 V387.0 V393.0 V393.0 H568.3 V393.0 V402.0 V402.0 H569.3 V402.0 V411.0 V411.0 H570.3 V411.0 V417.0 V417.0 H571.3 V417.0 V479.0 V479.0 H572.3 V479.0 V534.2 V534.2 H573.3 V534.2 V559.6 V559.6 H574.3 V559.6 V643.0 V643.0 H575.3 V643.0 V612.9 V612.9 H576.3 V612.9 V572.0 V572.0 H577.3 V572.0 V554.0 V554.0 H578.3 V554.0 V548.0 V554.0 H579.3 V554.0 V575.2 V575.2 H580.3 V575.2 V601.3 V601.3 H581.3 V601.3 V617.0 V611.3 H582.3 V611.3 V596.3 V596.3 H583.3 V596.3 V578.0 V578.0 H584.3 V578.0 V567.0 V571.3 H585.3 V571.3 V582.9 V582.9 H586.3 V582.9 V597.1 V597.1 H587.3 V597.1 V610.0 V608.8 H588.3 V608.8 V596.3 V596.3 H589.3 V596.3 V579.1 V579.1 H590.3 V579.1 V565.0 V568.1 H591.3 V568.1 V583.5 V583.5 H592.3 V583.5 V596.2 V596.2 H593.3 V596.2 V608.7 V608.7 H594.3 V610.0 V598.8 V598.8 H595.3 V598.8 V588.5 V588.5 H596.3 V588.5 V579.3 V579.3 H597.3 V579.3 V571.0 V572.2 H598.3 V572.2 V583.8 V583.8 H599.3 V583.8 V592.2 V592.2 H600.3 V592.2 V600.2 V600.2 H601.3 V601.0 V595.6 V595.6 H602.3 V595.6 V583.6 V583.6 H603.3 V583.6 V569.4 V569.4 H604.3 V569.4 V473.6 V473.6 H605.3 V473.6 V433.4 V433.4 H606.3 V433.4 V407.4 V407.4 H607.3 V407.4 V387.6 V387.6 H608.3 V387.0 V399.0 V399.0 H609.3 V399.0 V402.0 V402.0 H610.3 V402.0 V411.0 V411.0 H611.3 V411.0 V421.2 V421.2 H612.3 V421.2 V500.6 V500.6 H613.3 V500.6 V534.7 V534.7 H614.3 V534.7 V559.9 V559.9 H615.3 V559.9 V643.0 V643.0 H616.3 V643.0 V604.3 V604.3 H617.3 V604.3 V564.0 V564.0 H618.3 V564.0 V552.3 V552.3 H619.3 V548.0 V558.0 V558.0 H620.3 V558.0 V580.4 V580.4 H621.3 V580.4 V606.6 V606.6 H622.3 V606.6 V617.0 V608.5 H623.3 V608.5 V592.7 V592.7 H624.3 V592.7 V574.3 V574.3 H625.3 V574.3 V567.0 V573.5 H626.3 V573.5 V585.7 V585.7 H627.3 V585.7 V600.0 V600.0 H628.3 V600.0 V610.0 V606.3 H629.3 V606.3 V593.2 V593.2 H630.3 V593.2 V575.6 V575.6 H631.3 V575.6 V565.0 V571.2 H632.3 V571.2 V586.3 V586.3 H633.3 V586.3 V598.8 V598.8 H634.3 V598.8 V610.0 V608.7 H635.3 V608.7 V596.3 V596.3 H636.3 V596.3 V586.7 V586.7 H637.3 V586.7 V577.5 V577.5 H638.3 V577.5 V571.0 V574.5 H639.3 V574.5 V585.8 V585.8 H640.3 V585.8 V593.8 V593.8 H641.3 V593.8 V601.0 V600.4 H642.3 V600.4 V594.4 V594.4 H643.3 V594.4 V579.4 V579.4 H644.3 V579.4 V555.2 V555.2 H645.3 V555.2 V460.4 V460.4 H646.3 V460.4 V433.1 V433.1 H647.3 V433.1 V407.1 V407.1 H648.3 V407.1 V387.4 V387.4 H649.3 V387.0 V402.0 V402.0 H650.3 V402.0 V403.8 V403.8 H651.3 V403.8 V411.0 V411.0 H652.3 V411.0 V423.8 V423.8 H653.3 V423.8 V522.2 V522.2 H654.3 V522.2 V547.0 V547.0 H655.3 V547.0 V576.6 V576.6 H656.3 V576.6 V643.0 V638.7 H657.3 V638.7 V596.0 V596.0 H658.3 V596.0 V559.1 V559.1 H659.3 V559.1 V550.6 V550.6 H660.3 V548.0 V562.0 V562.0 H661.3 V562.0 V585.7 V585.7 H662.3 V585.7 V611.8 V611.8 H663.3 V617.0 V605.7 V605.7 H664.3 V605.7 V589.0 V589.0 H665.3 V589.0 V570.7 V570.7 H666.3 V567.0 V575.7 V575.7 H667.3 V575.7 V588.6 V588.6 H668.3 V588.6 V602.9 V602.9 H669.3 V602.9 V610.0 V603.7 H670.3 V603.7 V589.7 V589.7 H671.3 V589.7 V572.1 V572.1 H672.3 V565.0 V574.2 V574.2 H673.3 V574.2 V588.8 V588.8 H674.3 V588.8 V601.3 V601.3 H675.3 V601.3 V610.0 V606.2 H676.3 V606.2 V594.1 V594.1 H677.3 V594.1 V584.8 V584.8 H678.3 V584.8 V575.6 V575.6 H679.3 V571.0 V576.8 V576.8 H680.3 V576.8 V587.4 V587.4 H681.3 V587.4 V595.4 V595.4 H682.3 V595.4 V601.0 V599.2 H683.3 V599.2 V593.2 V593.2 H684.3 V593.2 V575.2 V575.2 H685.3 V575.2 V527.6 V527.6 H686.3 V527.6 V447.2 V447.2 H687.3 V447.2 V424.7 V424.7 H688.3 V424.7 V400.7 V400.7 H689.3 V400.7 V387.2 V387.2 H690.3 V387.0 V402.0 V402.0 H691.3 V402.0 V407.4 V407.4 H692.3 V407.4 V411.0 V411.0 H693.3 V411.0 V435.8 V435.8 H694.3 V435.8 V533.3 V533.3 H695.3 V533.3 V559.1 V559.1 H696.3 V559.1 V609.8 V609.8 H697.3 V609.8 V643.0 V630.1 H698.3 V630.1 V588.0 V588.0 H699.3 V588.0 V557.4 V557.4 H700.3 V557.4 V548.9 V548.9 H701.3 V548.0 V566.0 V566.0 H702.3 V566.0 V590.9 V590.9 H703.3 V590.9 V617.0 V617.0 H704.3 V617.0 V602.8 V602.8 H705.3 V602.8 V585.3 V585.3 H706.3 V585.3 V567.0 V567.0 H707.3 V567.0 V577.8 V577.8 H708.3 V577.8 V591.4 V591.4 H709.3 V591.4 V605.7 V605.7 H710.3 V610.0 V601.2 V601.2 H711.3 V601.2 V586.2 V586.2 H712.3 V586.2 V568.5 V568.5 H713.3 V565.0 V577.3 V577.3 H714.3 V577.3 V591.3 V591.3 H715.3 V591.3 V603.8 V603.8 H716.3 V610.0 V603.7 V603.7 H717.3 V603.7 V592.2 V592.2 H718.3 V592.2 V583.0 V583.0 H719.3 V583.0 V573.8 V573.8 H720.3 V571.0 V579.2 V579.2 H721.3 V579.2 V589.0 V589.0 H722.3 V589.0 V597.0 V597.0 H723.3 V597.0 V601.0 V598.0 H724.3 V598.0 V592.0 V592.0 H725.3 V592.0 V571.0 V571.0 H726.3 V571.0 V500.0 V500.0 H727.3 V500.0 V434.0 V434.0 H728.3 V434.0 V408.0 V408.0 H729.3 V408.0 V388.0 V388.0 H730.3 V388.0 V387.0 V387.0 H731.3 V387.0 V402.0 V402.0 H732.3 V402.0 V411.0 V411.0 H733.3 V411.0 V411.0 V411.0 H734.3 V411.0 V457.4 V457.4 H735.3 V457.4 V533.8 V533.8 H736.3 V533.8 V559.4 V559.4 H737.3 V559.4 V643.0 V643.0 H738.3 V643.0 V621.5 V621.5 H739.3 V621.5 V580.0 V580.0 H740.3 V580.0 V555.7 V555.7 H741.3 V555.7 V548.0 V550.0 H742.3 V550.0 V570.0 V570.0 H743.3 V570.0 V596.1 V596.1 H744.3 V596.1 V617.0 V614.2 H745.3 V614.2 V600.0 V600.0 H746.3 V600.0 V581.7 V581.7 H747.3 V581.7 V567.0 V569.2 H748.3 V569.2 V580.0 V580.0 H749.3 V580.0 V594.3 V594.3 H750.3 V594.3 V608.6 V608.6 H751.3 V610.0 V598.7 V598.7 H752.3 V598.7 V582.6 V582.6 H753.3 V582.6 V565.0 V565.0 H754.3 V565.0 V580.4 V580.4 H755.3 V580.4 V593.8 V593.8 H756.3 V593.8 V606.3 V606.3 H757.3 V610.0 V601.2 V601.2 H758.3 V601.2 V590.4 V590.4 H759.3 V590.4 V581.2 V581.2 H760.3 V581.2 V571.9 V571.9 H761.3 V571.0 V581.5 V581.5 H762.3 V581.5 V590.6 V590.6 H763.3 V590.6 V598.6 V598.6 H764.3 V601.0 V596.8 V596.8 H765.3 V596.8 V587.8 V587.8 H766.3 V587.8 V570.2 V570.2 H767.3 V570.2 V486.8 V486.8 H768.3 V486.8 V433.7 V433.7 H769.3 V433.7 V407.7 V407.7 H770.3 V407.7 V387.8 V387.8 H771.3 V387.0 V393.0 V393.0 H772.3 V393.0 V402.0 V402.0 H773.3 V402.0 V411.0 V411.0 H774.3 V411.0 V417.0 V417.0 H775.3 V417.0 V479.0 V479.0 H776.3 V479.0 V534.3 V534.3 H777.3 V534.3 V559.6 V559.6 H778.3 V559.6 V643.0 V643.0 H779.3 V643.0 V612.9 V612.9 H780.3 V612.9 V572.0 V572.0 H781.3 V572.0 V554.0 V554.0 H782.3 V548.0 V554.0 V554.0 H783.3 V554.0 V575.2 V575.2 H784.3 V575.2 V601.3 V601.3 H785.3 V601.3 V617.0 V611.3 H786.3 V611.3 V596.3 V596.3 H787.3 V596.3 V578.0 V578.0 H788.3 V578.0 V567.0 V571.3 H789.3 V571.3 V582.9 V582.9 H790.3 V582.9 V597.1 V597.1 H791.3 V597.1 V610.0 V608.7 H792.3 V608.7 V596.2 V596.2 H793.3 V596.2 V579.1 V579.1 H794.3 V579.1 V565.0 V568.1 H795.3 V568.1 V583.5 V583.5 H796.3 V583.5 V596.3 V596.3 H797.3 V596.3 V608.8 V608.8 H798.3 V610.0 V598.7 V598.7 H799.3 V598.7 V588.5 V588.5 H800.3 V588.5 V579.3 V579.3 H801.3 V579.3 V571.0 V572.2 H802.3 V572.2 V583.8 V583.8 H803.3 V583.8 V591.1 V591.1 H804.3 V591.1 V597.8 V597.8 H805.3 V598.5 V594.3 V594.3 H806.3 V594.3 V585.1 V585.1 H807.3 V585.1 V574.1 V574.1 H808.3 V574.1 V500.4 V500.4 H809.3 V500.4 V469.4 V469.4 H810.3 V469.4 V449.4 V449.4 H811.3 V449.4 V434.2 V434.2 H812.3 V433.7 V442.9 V442.9 H813.3 V442.9 V445.2 V445.2 H814.3 V445.2 V452.2 V452.2 H815.3 V452.2 V460.1 V460.1 H816.3 V460.1 V521.2 V521.2 H817.3 V521.2 V547.5 V547.5 H818.3 V547.5 V566.8 V566.8 H819.3 V566.8 V630.8 V630.8 H820.3 V630.8 V601.0 V601.0 H821.3 V601.0 V570.0 V570.0 H822.3 V570.0 V561.0 V561.0 H823.3 V557.7 V565.4 V565.4 H824.3 V565.4 V582.6 V582.6 H825.3 V582.6 V602.7 V602.7 H826.3 V602.7 V610.8 V604.2 H827.3 V604.2 V592.1 V592.1 H828.3 V592.1 V577.9 V577.9 H829.3 V577.9 V572.3 V577.3 H830.3 V577.3 V586.7 V586.7 H831.3 V586.7 V597.7 V597.7 H832.3 V597.7 V605.4 V602.5 H833.3 V602.5 V592.5 V592.5 H834.3 V592.5 V578.9 V578.9 H835.3 V578.9 V570.8 V575.5 H836.3 V575.5 V587.1 V587.1 H837.3 V587.1 V596.7 V596.7 H838.3 V596.7 V605.4 V604.4 H839.3 V604.4 V594.8 V594.8 H840.3 V594.8 V587.5 V587.5 H841.3 V587.5 V580.3 V580.3 H842.3 V580.3 V575.4 V578.1 H843.3 V578.1 V586.9 V586.9 H844.3 V586.9 V594.3 V594.3 H845.3 V594.3 V601.0 V600.4 H846.3 V600.4 V594.4 V594.4 H847.3 V594.4 V579.4 V579.4 H848.3 V579.4 V555.2 V555.2 H849.3 V555.2 V460.4 V460.4 H850.3 V460.4 V433.1 V433.1 H851.3 V433.1 V407.1 V407.1 H852.3 V407.1 V387.4 V387.4 H853.3 V387.0 V402.0 V402.0 H854.3 V402.0 V403.8 V403.8 H855.3 V403.8 V411.0 V411.0 H856.3 V411.0 V423.8 V423.8 H857.3 V423.8 V522.2 V522.2 H858.3 V522.2 V547.0 V547.0 H859.3 V547.0 V576.6 V576.6 H860.3 V576.6 V643.0 V638.7 H861.3 V638.7 V596.0 V596.0 H862.3 V596.0 V559.1 V559.1 H863.3 V559.1 V550.6 V550.6 H864.3 V548.0 V562.0 V562.0 H865.3 V562.0 V585.7 V585.7 H866.3 V585.7 V611.8 V611.8 H867.3 V617.0 V605.7 V605.7 H868.3 V605.7 V589.0 V589.0 H869.3 V589.0 V570.7 V570.7 H870.3 V567.0 V575.7 V575.7 H871.3 V575.7 V588.6 V588.6 H872.3 V588.6 V602.9 V602.9 H873.3 V602.9 V610.0 V603.7 H874.3 V603.7 V589.7 V589.7 H875.3 V589.7 V572.1 V572.1 H876.3 V565.0 V574.2 V574.2 H877.3 V574.2 V588.8 V588.8 H878.3 V588.8 V601.3 V601.3 H879.3 V601.3 V610.0 V606.2 H880.3 V606.2 V594.1 V594.1 H881.3 V594.1 V584.8 V584.8 H882.3 V584.8 V575.6 V575.6 H883.3 V571.0 V576.8 V576.8 H884.3 V576.8 V587.4 V587.4 H885.3 V587.4 V595.4 V595.4 H886.3 V595.4 V601.0 V599.2 H887.3 V599.2 V593.2 V593.2 H888.3 V593.2 V575.2 V575.2 H889.3 V575.2 V527.6 V527.6 H890.3 V527.6 V447.2 V447.2 H891.3 V447.2 V424.7 V424.7 H892.3 V424.7 V400.7 V400.7 H893.3 V400.7 V387.2 V387.2 H894.3 V387.0 V402.0 V402.0 H895.3 V402.0 V407.4 V407.4 H896.3 V407.4 V411.0 V411.0 H897.3 V411.0 V435.8 V435.8 H898.3 V435.8 V533.3 V533.3 H899.3 V533.3 V559.1 V559.1 H900.3 V559.1 V609.8 V609.8 H901.3 V609.8 V643.0 V630.1 H902.3 V630.1 V588.0 V588.0 H903.3 V588.0 V557.4 V557.4 H904.3 V557.4 V548.9 V548.9 H905.3 V548.0 V566.0 V566.0 H906.3 V566.0 V590.9 V590.9 H907.3 V590.9 V617.0 V617.0 H908.3 V617.0 V602.8 V602.8 H909.3 V602.8 V585.3 V585.3 H910.3 V585.3 V567.0 V567.0 H911.3 V567.0 V577.8 V577.8 H912.3 V577.8 V591.4 V591.4 H913.3 V591.4 V605.7 V605.7 H914.3 V610.0 V601.2 V601.2 H915.3 V601.2 V586.2 V586.2 H916.3 V586.2 V568.5 V568.5 H917.3 V565.0 V577.3 V577.3 H918.3 V577.3 V591.3 V591.3 H919.3 V591.3 V603.8 V603.8 H920.3 V610.0 V603.7 V603.7 H921.3 V603.7 V592.2 V592.2 H922.3 V592.2 V583.0 V583.0 H923.3 V583.0 V573.8 V573.8 H924.3 V571.0 V579.2 V579.2 H925.3 V579.2 V589.0 V589.0 H926.3 V589.0 V597.0 V597.0 H927.3 V597.0 V601.0 V598.0 H928.3 V598.0 V592.0 V592.0 H929.3 V592.0 V571.0 V571.0 H930.3 V571.0 V500.0 V500.0 H931.3 V500.0 V434.0 V434.0 H932.3 V434.0 V408.0 V408.0 H933.3 V408.0 V388.0 V388.0 H934.3 V388.0 V387.0 V387.0 H935.3 V387.0 V402.0 V402.0 H936.3 V402.0 V411.0 V411.0 H937.3 V411.0 V411.0 V411.0 H938.3 V411.0 V457.4 V457.4 H939.3 V457.4 V533.8 V533.8 H940.3 V533.8 V559.4 V559.4 H941.3 V559.4 V643.0 V643.0 H942.3 V643.0 V621.5 V621.5 H943.3 V621.5 V580.0 V580.0 H944.3 V580.0 V555.7 V555.7 H945.3 V555.7 V548.0 V550.0 H946.3 V550.0 V570.0 V570.0 H947.3 V570.0 V596.1 V596.1 H948.3 V596.1 V617.0 V614.2 H949.3 V614.2 V600.0 V600.0 H950.3 V600.0 V581.7 V581.7 H951.3 V581.7 V567.0 V569.2 H952.3 V569.2 V580.0 V580.0 H953.3 V580.0 V594.3 V594.3 H954.3 V594.3 V608.6 V608.6 H955.3 V610.0 V598.7 V598.7 H956.3 V598.7 V582.6 V582.6 H957.3 V582.6 V565.0 V565.0 H958.3 V565.0 V580.4 V580.4 H959.3 V580.4 V593.8 V593.8 H960.3 V593.8 V606.3 V606.3 H961.3 V610.0 V601.2 V601.2 H962.3 V601.2 V590.4 V590.4 H963.3 V590.4 V581.2 V581.2 H964.3 V581.2 V571.9 V571.9 H965.3 V571.0 V581.5 V581.5 H966.3 V581.5 V590.6 V590.6 H967.3 V590.6 V598.6 V598.6 H968.3 V601.0 V596.8 V596.8 H969.3 V596.8 V587.8 V587.8 H970.3 V587.8 V570.2 V570.2 H971.3 V570.2 V486.8 V486.8 H972.3 V486.8 V433.7 V433.7 H973.3 V433.7 V407.7 V407.7 H974.3 V407.7 V387.8 V387.8 H975.3 V387.0 V393.0 V393.0 H976.3 V393.0 V402.0 V402.0 H977.3 V402.0 V411.0 V411.0 H978.3 V411.0 V417.0 V417.0 H979.3 V417.0 V479.0 V479.0 H980.3 V479.0 V534.3 V534.3 H981.3 V534.3 V559.6 V559.6 H982.3 V559.6 V643.0 V643.0 H983.3 V643.0 V612.9 V612.9 H984.3 V612.9 V572.0 V572.0 H985.3 V572.0 V554.0 V554.0 H986.3 V548.0 V554.0 V554.0 H987.3 V554.0 V575.2 V575.2 H988.3 V575.2 V601.3 V601.3 H989.3 V601.3 V617.0 V611.3 H990.3 V611.3 V596.3 V596.3 H991.3 V596.3 V578.0 V578.0 H992.3 V578.0 V567.0 V571.3 H993.3 V571.3 V582.9 V582.9 H994.3 V582.9 V597.1 V597.1 H995.3 V597.1 V610.0 V608.7 H996.3 V608.7 V596.2 V596.2 H997.3 V596.2 V579.1 V579.1 H998.3 V579.1 V565.0 V568.1 H999.3 V568.1 V583.5 V583.5 H1000.3 V583.5 V596.3 V596.3 H1001.3 V596.3 V608.8 V608.8 H1002.3 V610.0 V598.7 V598.7 H1003.3 V598.7 V588.5 V588.5 H1004.3 V588.5 V579.3 V579.3 H1005.3 V579.3 V571.0 V572.2 H1006.3 V572.2 V583.8 V583.8 H1007.3 V583.8 V592.2 V592.2 H1008.3 V592.2 V600.2 V600.2 H1009.3 V601.0 V595.6 V595.6 H1010.3 V595.6 V583.6 V583.6 H1011.3 V583.6 V569.4 V569.4 H1012.3 V569.4 V473.6 V473.6 H1013.3 V473.6 V433.4 V433.4 H1014.3 V433.4 V407.4 V407.4 H1015.3 V407.4 V387.6 V387.6 H1016.3 V387.0 V399.0 V399.0 H1017.3 V399.0 V402.0 V402.0 H1018.3 V402.0 V411.0 V411.0 H1019.3 V411.0 V421.3 V421.3 H1020.3 V421.3 V500.6 V500.6 H1021.3 V500.6 V534.8 V534.8 H1022.3 V534.8 V559.9 V559.9 H1023.3 V559.9 V643.0 V643.0 H1024.3 V643.0 V604.3 V604.3 H1025.3 V604.3 V564.0 V564.0 H1026.3 V564.0 V552.3 V552.3 H1027.3 V548.0 V558.0 V558.0 H1028.3 V558.0 V580.4 V580.4 H1029.3 V580.4 V606.6 V606.6 H1030.3 V606.6 V617.0 V608.5 H1031.3 V608.5 V592.7 V592.7 H1032.3 V592.7 V574.3 V574.3 H1033.3 V574.3 V567.0 V573.5 H1034.3 V573.5 V585.7 V585.7 H1035.3 V585.7 V600.0 V600.0 H1036.3 V600.0 V610.0 V606.2 H1037.3 V606.2 V593.2 V593.2 H1038.3 V593.2 V575.6 V575.6 H1039.3 V575.6 V565.0 V571.2 H1040.3 V571.2 V586.3 V586.3 H1041.3 V586.3 V598.8 V598.8 H1042.3 V598.8 V610.0 V608.7 H1043.3 V608.7 V596.2 V596.2 H1044.3 V596.2 V586.7 V586.7 H1045.3 V586.7 V577.5 V577.5 H1046.3 V577.5 V571.0 V574.5 H1047.3 V574.5 V585.8 V585.8 H1048.3 V585.8 V593.8 V593.8 H1049.3 V593.8 V601.0 V600.4 H1050.3 V600.4 V594.4 V594.4 H1051.3 V594.4 V579.4 V579.4 H1052.3 V579.4 V555.2 V555.2 H1053.3 V555.2 V460.4 V460.4 H1054.3 V460.4 V433.1 V433.1 H1055.3 V433.1 V407.1 V407.1 H1056.3 V407.1 V387.4 V387.4 H1057.3 V387.0 V402.0 V402.0 H1058.3 V402.0 V403.8 V403.8 H1059.3 V403.8 V411.0 V411.0 H1060.3" stroke="#3434CE" stroke-width="1.15" fill="none" stroke-linejoin="miter"/>
<path d="M34.5,319.1 L35.2,319.3 L36.0,318.3 L36.8,318.7 L37.5,318.3 L38.2,318.6 L39.0,318.7 L39.8,318.2 L40.5,319.4 L41.2,318.2 L42.0,319.8 L42.8,318.9 L43.5,318.9 L44.2,318.9 L45.0,317.6 L45.8,318.0 L46.5,318.7 L47.2,318.6 L48.0,318.0 L48.8,318.8 L49.5,318.1 L50.2,319.7 L51.0,317.7 L51.8,318.1 L52.5,318.0 L53.2,320.4 L54.0,318.5 L54.8,318.1 L55.5,317.9 L56.2,317.5 L57.0,318.1 L57.8,319.5 L58.5,317.2 L59.2,318.9 L60.0,318.4 L60.8,318.3 L61.5,319.8 L62.2,318.4 L63.0,318.4 L63.8,318.4 L64.5,318.7 L65.2,318.7 L66.0,318.5 L66.8,319.2 L67.5,317.7 L68.2,318.8 L69.0,318.9 L69.8,318.1 L70.5,319.8 L71.2,317.3 L72.0,318.6 L72.8,319.0 L73.5,318.5 L74.2,318.6 L75.0,316.9 L75.8,317.8 L76.5,317.7 L77.2,317.8 L78.0,318.8 L78.8,317.1 L79.5,318.2 L80.2,318.7 L81.0,318.9 L81.8,318.7 L82.5,318.5 L83.2,318.5 L84.0,318.4 L84.8,318.6 L85.5,318.8 L86.2,318.9 L87.0,319.5 L87.8,319.4 L88.5,318.2 L89.2,318.5 L90.0,318.4 L90.8,319.8 L91.5,317.2 L92.2,320.0 L93.0,320.4 L93.8,317.4 L94.5,317.9 L95.2,320.3 L96.0,320.6 L96.8,319.9 L97.5,315.7 L98.2,318.2 L99.0,317.9 L99.8,319.2 L100.5,317.0 L101.2,318.3 L102.0,318.8 L102.8,317.4 L103.5,317.5 L104.2,319.2 L105.0,318.2 L105.8,316.4 L106.5,318.8 L107.2,319.4 L108.0,318.4 L108.8,317.9 L109.5,319.1 L110.2,319.0 L111.0,319.5 L111.8,318.3 L112.5,318.7 L113.2,318.0 L114.0,317.0 L114.8,316.1 L115.5,318.9 L116.2,316.4 L117.0,317.7 L117.8,318.6 L118.5,318.8 L119.2,317.9 L120.0,317.9 L120.8,318.9 L121.5,318.7 L122.2,318.8 L123.0,318.6 L123.8,318.1 L124.5,318.1 L125.2,318.0 L126.0,320.4 L126.8,318.7 L127.5,319.2 L128.2,318.2 L129.0,318.6 L129.8,319.0 L130.5,318.0 L131.2,318.2 L132.0,319.1 L132.8,318.1 L133.5,319.1 L134.2,318.1 L135.0,317.7 L135.8,318.2 L136.5,318.8 L137.2,316.7 L138.0,318.6 L138.8,317.8 L139.5,319.6 L140.2,319.9 L141.0,318.8 L141.8,318.8 L142.5,317.8 L143.2,317.0 L144.0,316.3 L144.8,318.6 L145.5,318.6 L146.2,318.7 L147.0,320.0 L147.8,318.8 L148.5,319.4 L149.2,318.3 L150.0,317.2 L150.8,318.4 L151.5,317.1 L152.2,318.3 L153.0,318.9 L153.8,318.2 L154.5,318.0 L155.2,318.9 L156.0,318.6 L156.8,319.1 L157.5,319.4 L158.2,318.1 L159.0,319.0 L159.8,319.1 L160.5,318.8 L161.2,318.2 L162.0,317.9 L162.8,316.3 L163.5,318.3 L164.2,318.7 L165.0,317.4 L165.8,318.8 L166.5,318.0 L167.2,320.2 L168.0,318.7 L168.8,319.9 L169.5,318.9 L170.2,318.3 L171.0,319.1 L171.8,317.6 L172.5,317.7 L173.2,318.3 L174.0,318.3 L174.8,319.7 L175.5,318.5 L176.2,318.6 L177.0,318.1 L177.8,318.2 L178.5,320.7 L179.2,318.7 L180.0,318.3 L180.8,318.4 L181.5,319.0 L182.2,318.4 L183.0,317.9 L183.8,317.9 L184.5,318.2 L185.2,318.0 L186.0,318.6 L186.8,318.5 L187.5,318.0 L188.2,318.5 L189.0,317.9 L189.8,317.7 L190.5,319.1 L191.2,318.4 L192.0,319.0 L192.8,319.9 L193.5,320.5 L194.2,318.4 L195.0,318.1 L195.8,318.7 L196.5,317.9 L197.2,317.4 L198.0,315.0 L198.8,318.4 L199.5,316.9 L200.2,317.3 L201.0,319.3 L201.8,318.6 L202.5,321.9 L203.2,317.7 L204.0,317.6 L204.8,318.2 L205.5,319.6 L206.2,318.3 L207.0,318.5 L207.8,318.5 L208.5,317.4 L209.2,319.5 L210.0,318.8 L210.8,320.0 L211.5,318.8 L212.2,317.8 L213.0,317.4 L213.8,317.8 L214.5,317.9 L215.2,320.2 L216.0,321.3 L216.8,320.2 L217.5,319.3 L218.2,319.7 L219.0,318.6 L219.8,317.4 L220.5,318.2 L221.2,318.2 L222.0,317.8 L222.8,318.4 L223.5,319.5 L224.2,317.9 L225.0,319.6 L225.8,318.6 L226.5,319.5 L227.2,318.2 L228.0,317.3 L228.8,317.2 L229.5,318.6 L230.2,318.5 L231.0,318.4 L231.8,319.3 L232.5,318.7 L233.2,318.3 L234.0,317.2 L234.8,318.7 L235.5,318.5 L236.2,318.0 L237.0,318.7 L237.8,318.3 L238.5,319.4 L239.2,318.8 L240.0,318.0 L240.8,319.4 L241.5,319.0 L242.2,319.1 L243.0,318.9 L243.8,318.8 L244.5,318.3 L245.2,319.3 L246.0,317.9 L246.8,318.3 L247.5,318.4 L248.2,318.8 L249.0,319.2 L249.8,318.5 L250.5,318.8 L251.2,318.6 L252.0,317.9 L252.8,319.2 L253.5,319.0 L254.2,318.9 L255.0,318.2 L255.8,318.8 L256.5,317.6 L257.2,319.1 L258.0,319.0 L258.8,318.9 L259.5,317.2 L260.2,319.5 L261.0,318.5 L261.8,319.0 L262.5,316.5 L263.2,320.2 L264.0,321.1 L264.8,319.9 L265.5,318.6 L266.2,316.0 L267.0,318.4 L267.8,318.7 L268.5,319.6 L269.2,320.0 L270.0,318.7 L270.8,317.3 L271.5,321.1 L272.2,316.9 L273.0,316.5 L273.8,317.9 L274.5,320.5 L275.2,319.1 L276.0,316.4 L276.8,319.2 L277.5,317.8 L278.2,317.7 L279.0,321.3 L279.8,319.0 L280.5,318.2 L281.2,319.0 L282.0,318.4 L282.8,319.5 L283.5,318.2 L284.2,318.8 L285.0,319.2 L285.8,318.0 L286.5,319.3 L287.2,318.5 L288.0,319.0 L288.8,318.8 L289.5,318.5 L290.2,319.4 L291.0,317.9 L291.8,318.9 L292.5,318.4 L293.2,318.7 L294.0,319.1 L294.8,319.1 L295.5,318.6 L296.2,319.0 L297.0,316.9 L297.8,319.1 L298.5,318.7 L299.2,318.5 L300.0,317.6 L300.8,318.8 L301.5,321.2 L302.2,317.2 L303.0,317.1 L303.8,318.2 L304.5,316.3 L305.2,319.2 L306.0,318.6 L306.8,319.2 L307.5,319.1 L308.2,318.4 L309.0,318.1 L309.8,317.2 L310.5,318.5 L311.2,318.5 L312.0,319.6 L312.8,318.8 L313.5,317.8 L314.2,318.4 L315.0,318.0 L315.8,320.1 L316.5,318.5 L317.2,318.5 L318.0,318.4 L318.8,319.1 L319.5,317.6 L320.2,318.2 L321.0,318.2 L321.8,317.4 L322.5,320.0 L323.2,318.7 L324.0,317.9 L324.8,317.3 L325.5,318.4 L326.2,320.4 L327.0,319.3 L327.8,318.1 L328.5,318.3 L329.2,317.3 L330.0,318.4 L330.8,318.6 L331.5,317.8 L332.2,320.9 L333.0,319.9 L333.8,319.1 L334.5,319.2 L335.2,320.6 L336.0,318.0 L336.8,318.6 L337.5,317.8 L338.2,317.8 L339.0,318.7 L339.8,318.4 L340.5,318.6 L341.2,318.6 L342.0,318.4 L342.8,318.1 L343.5,318.4 L344.2,318.8 L345.0,318.9 L345.8,319.4 L346.5,318.1 L347.2,319.5 L348.0,318.2 L348.8,318.6 L349.5,317.2 L350.2,319.2 L351.0,317.6 L351.8,319.3 L352.5,319.4 L353.2,319.1 L354.0,317.9 L354.8,318.7 L355.5,318.1 L356.2,318.1 L357.0,317.9 L357.8,319.1 L358.5,318.6 L359.2,318.7 L360.0,317.6 L360.8,320.0 L361.5,317.9 L362.2,317.0 L363.0,317.5 L363.8,317.8 L364.5,318.7 L365.2,318.2 L366.0,318.7 L366.8,317.3 L367.5,319.1 L368.2,319.6 L369.0,319.5 L369.8,316.5 L370.5,317.6 L371.2,317.8 L372.0,318.0 L372.8,319.6 L373.5,318.6 L374.2,318.0 L375.0,318.5 L375.8,318.0 L376.5,317.8 L377.2,318.3 L378.0,318.0 L378.8,318.8 L379.5,320.1 L380.2,319.3 L381.0,318.9 L381.8,319.8 L382.5,322.0 L383.2,318.2 L384.0,318.8 L384.8,319.1 L385.5,315.8 L386.2,318.9 L387.0,318.7 L387.8,317.3 L388.5,318.4 L389.2,319.0 L390.0,318.1 L390.8,318.7 L391.5,318.9 L392.2,318.3 L393.0,318.5 L393.8,319.4 L394.5,318.3 L395.2,318.6 L396.0,320.1 L396.8,316.1 L397.5,319.5 L398.2,318.8 L399.0,319.1 L399.8,319.1 L400.5,320.2 L401.2,318.3 L402.0,319.0 L402.8,317.9 L403.5,318.8 L404.2,318.4 L405.0,318.6 L405.8,319.2 L406.5,318.5 L407.2,319.4 L408.0,319.1 L408.8,318.5 L409.5,318.3 L410.2,318.9 L411.0,318.8 L411.8,318.6 L412.5,318.3 L413.2,318.3 L414.0,318.0 L414.8,318.8 L415.5,318.2 L416.2,319.3 L417.0,320.1 L417.8,316.7 L418.5,318.4 L419.2,317.6 L420.0,316.4 L420.8,319.6 L421.5,316.3 L422.2,320.0 L423.0,317.7 L423.8,318.7 L424.5,320.0 L425.2,320.3 L426.0,317.1 L426.8,319.5 L427.5,320.4 L428.2,317.6 L429.0,319.1 L429.8,319.6 L430.5,318.9 L431.2,319.2 L432.0,319.7 L432.8,319.0 L433.5,318.6 L434.2,317.3 L435.0,318.6 L435.8,318.3 L436.5,317.7 L437.2,317.9 L438.0,317.9 L438.8,317.1 L439.5,317.8 L440.2,317.8 L441.0,318.3 L441.8,318.4 L442.5,318.2 L443.2,318.8 L444.0,319.0 L444.8,319.9 L445.5,318.2 L446.2,318.0 L447.0,319.2 L447.8,317.5 L448.5,318.5 L449.2,319.2 L450.0,318.5 L450.8,318.6 L451.5,317.6 L452.2,318.8 L453.0,318.8 L453.8,317.8 L454.5,317.7 L455.2,319.4 L456.0,318.9 L456.8,318.6 L457.5,318.4 L458.2,318.2 L459.0,317.8 L459.8,316.6 L460.5,320.6 L461.2,318.4 L462.0,318.8 L462.8,317.7 L463.5,320.0 L464.2,318.4 L465.0,319.1 L465.8,319.6 L466.5,317.8 L467.2,319.4 L468.0,318.3 L468.8,319.8 L469.5,318.9 L470.2,318.3 L471.0,318.4 L471.8,318.7 L472.5,319.5 L473.2,318.1 L474.0,318.6 L474.8,318.2 L475.5,317.6 L476.2,319.6 L477.0,318.7 L477.8,318.3 L478.5,317.5 L479.2,319.3 L480.0,317.9 L480.8,318.2 L481.5,319.0 L482.2,319.5 L483.0,318.5 L483.8,319.5 L484.5,318.2 L485.2,317.5 L486.0,318.7 L486.8,319.6 L487.5,317.5 L488.2,317.5 L489.0,319.3 L489.8,318.7 L490.5,319.4 L491.2,318.8 L492.0,317.8 L492.8,318.3 L493.5,317.6 L494.2,319.5 L495.0,318.1 L495.8,317.1 L496.5,319.2 L497.2,318.8 L498.0,318.0 L498.8,317.6 L499.5,319.8 L500.2,315.4 L501.0,319.1 L501.8,317.2 L502.5,317.8 L503.2,318.0 L504.0,318.7 L504.8,318.5 L505.5,318.5 L506.2,318.9 L507.0,318.5 L507.8,318.3 L508.5,315.6 L509.2,317.5 L510.0,318.8 L510.8,319.4 L511.5,318.7 L512.2,318.1 L513.0,319.9 L513.8,318.9 L514.5,319.8 L515.2,318.6 L516.0,318.5 L516.8,317.7 L517.5,318.5 L518.2,318.7 L519.0,318.0 L519.8,317.2 L520.5,317.8 L521.2,318.3 L522.0,318.4 L522.8,319.5 L523.5,318.6 L524.2,318.4 L525.0,318.4 L525.8,316.8 L526.5,319.0 L527.2,318.1 L528.0,317.8 L528.8,317.7 L529.5,317.2 L530.2,318.8 L531.0,317.5 L531.8,318.9 L532.5,318.7 L533.2,319.4 L534.0,318.6 L534.8,318.6 L535.5,318.3 L536.2,319.1 L537.0,319.7 L537.8,319.9 L538.5,319.0 L539.2,318.6 L540.0,319.2 L540.8,317.6 L541.5,317.5 L542.2,318.3 L543.0,318.3 L543.8,317.8 L544.5,320.2 L545.2,318.9 L546.0,319.5 L546.8,319.1 L547.5,319.3 L548.2,319.4 L549.0,318.2 L549.8,319.0 L550.5,319.6 L551.2,318.9 L552.0,317.9 L552.8,318.0 L553.5,318.5 L554.2,318.3 L555.0,318.3 L555.8,318.5 L556.5,318.9 L557.2,317.7 L558.0,317.9 L558.8,318.4 L559.5,318.3 L560.2,318.8 L561.0,319.4 L561.8,318.3 L562.5,318.1 L563.2,318.3 L564.0,318.5 L564.8,318.9 L565.5,316.4 L566.2,318.6 L567.0,318.4 L567.8,318.8 L568.5,318.5 L569.2,317.8 L570.0,318.3 L570.8,319.2 L571.5,319.5 L572.2,318.4 L573.0,317.6 L573.8,317.9 L574.5,318.2 L575.2,319.2 L576.0,319.6 L576.8,316.9 L577.5,318.5 L578.2,317.7 L579.0,316.4 L579.8,319.3 L580.5,317.9 L581.2,318.2 L582.0,315.9 L582.8,319.1 L583.5,318.6 L584.2,319.3 L585.0,318.1 L585.8,317.2 L586.5,318.5 L587.2,319.1 L588.0,318.3 L588.8,318.9 L589.5,319.9 L590.2,319.6 L591.0,319.7 L591.8,318.4 L592.5,318.8 L593.2,319.4 L594.0,318.4 L594.8,318.6 L595.5,318.2 L596.2,317.7 L597.0,319.1 L597.8,319.2 L598.5,319.1 L599.2,318.1 L600.0,318.1 L600.8,318.7 L601.5,318.7 L602.2,317.4 L603.0,318.0 L603.8,317.9 L604.5,319.1 L605.2,318.9 L606.0,318.1 L606.8,318.1 L607.5,318.0 L608.2,318.0 L609.0,318.9 L609.8,319.4 L610.5,316.6 L611.2,318.6 L612.0,319.1 L612.8,319.5 L613.5,319.2 L614.2,319.0 L615.0,317.5 L615.8,318.4 L616.5,317.1 L617.2,319.4 L618.0,317.6 L618.8,319.2 L619.5,318.4 L620.2,318.7 L621.0,319.2 L621.8,318.6 L622.5,318.2 L623.2,318.9 L624.0,319.3 L624.8,318.2 L625.5,318.1 L626.2,318.8 L627.0,318.9 L627.8,317.6 L628.5,318.8 L629.2,320.3 L630.0,319.0 L630.8,317.3 L631.5,318.2 L632.2,318.4 L633.0,318.8 L633.8,318.1 L634.5,318.1 L635.2,318.9 L636.0,317.3 L636.8,320.0 L637.5,317.9 L638.2,319.9 L639.0,318.1 L639.8,318.1 L640.5,319.1 L641.2,318.0 L642.0,318.3 L642.8,318.7 L643.5,319.3 L644.2,318.2 L645.0,318.2 L645.8,318.1 L646.5,317.8 L647.2,317.9 L648.0,317.3 L648.8,318.9 L649.5,317.6 L650.2,318.3 L651.0,319.8 L651.8,319.3 L652.5,318.3 L653.2,319.3 L654.0,319.1 L654.8,317.6 L655.5,317.4 L656.2,319.1 L657.0,317.0 L657.8,318.6 L658.5,319.0 L659.2,319.3 L660.0,318.0 L660.8,319.5 L661.5,317.8 L662.2,318.7 L663.0,318.8 L663.8,319.1 L664.5,317.3 L665.2,315.8 L666.0,316.7 L666.8,321.7 L667.5,317.0 L668.2,318.4 L669.0,317.7 L669.8,317.7 L670.5,319.3 L671.2,317.6 L672.0,316.9 L672.8,318.8 L673.5,318.6 L674.2,317.6 L675.0,317.2 L675.8,319.0 L676.5,316.2 L677.2,318.1 L678.0,317.8 L678.8,319.0 L679.5,319.5 L680.2,318.3 L681.0,318.3 L681.8,319.0 L682.5,318.5 L683.2,318.3 L684.0,318.3 L684.8,318.4 L685.5,319.1 L686.2,317.2 L687.0,318.5 L687.8,318.0 L688.5,316.9 L689.2,318.5 L690.0,318.0 L690.8,319.0 L691.5,318.0 L692.2,317.2 L693.0,317.8 L693.8,317.8 L694.5,319.0 L695.2,318.0 L696.0,319.9 L696.8,318.6 L697.5,318.2 L698.2,317.1 L699.0,316.8 L699.8,319.3 L700.5,318.9 L701.2,318.3 L702.0,318.2 L702.8,318.4 L703.5,317.1 L704.2,317.8 L705.0,315.1 L705.8,316.2 L706.5,318.1 L707.2,317.9 L708.0,318.7 L708.8,316.9 L709.5,319.8 L710.2,319.2 L711.0,319.9 L711.8,317.4 L712.5,318.3 L713.2,318.5 L714.0,318.8 L714.8,318.1 L715.5,318.4 L716.2,319.4 L717.0,319.1 L717.8,318.2 L718.5,319.2 L719.2,319.4 L720.0,317.5 L720.8,318.5 L721.5,318.7 L722.2,318.6 L723.0,318.1 L723.8,317.6 L724.5,317.1 L725.2,317.5 L726.0,317.8 L726.8,320.1 L727.5,319.4 L728.2,320.1 L729.0,319.1 L729.8,319.6 L730.5,318.0 L731.2,318.7 L732.0,318.3 L732.8,319.5 L733.5,317.4 L734.2,317.7 L735.0,317.6 L735.8,317.8 L736.5,316.0 L737.2,319.7 L738.0,317.1 L738.8,319.9 L739.5,316.3 L740.2,317.6 L741.0,319.0 L741.8,318.5 L742.5,319.1 L743.2,317.2 L744.0,319.0 L744.8,317.2 L745.5,319.3 L746.2,317.5 L747.0,318.3 L747.8,318.7 L748.5,318.9 L749.2,319.6 L750.0,317.7 L750.8,317.8 L751.5,318.5 L752.2,319.7 L753.0,319.6 L753.8,319.2 L754.5,317.2 L755.2,317.8 L756.0,317.6 L756.8,318.6 L757.5,319.0 L758.2,319.5 L759.0,317.8 L759.8,319.0 L760.5,319.2 L761.2,300.0 L761.8,220.0 L762.5,180.0 L763.5,160.0 L764.5,149.0 L765.5,143.0 L766.5,140.0 L768.0,138.0 L769.0,137.5 L769.8,137.6 L770.5,137.1 L771.2,137.4 L772.0,137.5 L772.8,135.8 L773.5,137.6 L774.2,137.3 L775.0,139.8 L775.8,134.7 L776.5,138.9 L777.2,137.8 L778.0,135.1 L778.8,138.5 L779.5,137.3 L780.2,138.3 L781.0,137.7 L781.8,137.7 L782.5,137.8 L783.2,138.0 L784.0,136.9 L784.8,138.4 L785.5,137.9 L786.2,138.0 L787.0,137.4 L787.8,138.5 L788.5,137.2 L789.2,138.5 L790.0,139.0 L790.8,138.0 L791.5,137.6 L792.2,138.6 L793.0,136.7 L793.8,137.2 L794.5,136.5 L795.2,138.2 L796.0,138.4 L796.8,137.2 L797.5,138.4 L798.2,137.3 L799.0,138.0 L799.8,137.8 L800.5,138.0 L801.2,138.6 L802.0,137.6 L802.8,137.9 L803.5,137.3 L804.2,137.8 L805.0,137.3 L805.8,138.7 L806.5,136.9 L807.2,136.8 L808.0,138.6 L808.8,137.8 L809.5,137.9 L810.2,137.1 L811.0,137.4 L811.8,137.2 L812.5,137.7 L813.2,137.3 L814.0,137.9 L814.8,137.8 L815.5,137.3 L816.2,138.3 L817.0,136.9 L817.8,137.4 L818.5,138.0 L819.2,140.0 L820.0,137.4 L820.8,137.1 L821.5,138.9 L822.2,137.0 L823.0,141.0 L823.8,137.1 L824.5,138.1 L825.2,140.0 L826.0,137.5 L826.8,136.7 L827.5,137.4 L828.2,134.9 L829.0,138.6 L829.8,137.8 L830.5,139.2 L831.2,138.0 L832.0,138.1 L832.8,137.4 L833.5,137.1 L834.2,136.9 L835.0,137.0 L835.8,136.7 L836.5,136.8 L837.2,137.6 L838.0,137.7 L838.8,137.5 L839.5,137.3 L840.2,138.3 L841.0,136.3 L841.8,138.8 L842.5,138.9 L843.2,137.5 L844.0,139.2 L844.8,137.9 L845.5,137.5 L846.2,137.0 L847.0,135.9 L847.8,138.3 L848.5,136.6 L849.2,140.6 L850.0,136.1 L850.8,137.2 L851.5,137.9 L852.2,137.8 L853.0,136.1 L853.8,137.4 L854.5,137.8 L855.2,138.7 L856.0,137.7 L856.8,138.3 L857.5,138.0 L858.2,135.9 L859.0,136.4 L859.8,137.3 L860.5,140.0 L861.8,150.0 L862.5,200.0 L863.5,250.0 L864.5,285.0 L865.5,303.0 L866.5,312.0 L868.0,317.0 L869.0,317.6 L869.8,317.4 L870.5,318.6 L871.2,319.9 L872.0,318.2 L872.8,318.8 L873.5,317.6 L874.2,318.7 L875.0,319.6 L875.8,319.5 L876.5,318.6 L877.2,319.5 L878.0,318.6 L878.8,318.5 L879.5,317.7 L880.2,318.0 L881.0,319.1 L881.8,318.7 L882.5,318.2 L883.2,317.2 L884.0,318.2 L884.8,319.1 L885.5,319.1 L886.2,319.3 L887.0,318.4 L887.8,318.4 L888.5,318.3 L889.2,318.9 L890.0,317.9 L890.8,318.8 L891.5,320.4 L892.2,319.1 L893.0,319.1 L893.8,317.8 L894.5,317.6 L895.2,317.6 L896.0,318.6 L896.8,318.6 L897.5,319.0 L898.2,318.9 L899.0,320.0 L899.8,318.1 L900.5,317.1 L901.2,317.6 L902.0,319.7 L902.8,317.5 L903.5,318.4 L904.2,317.4 L905.0,318.3 L905.8,318.0 L906.5,317.5 L907.2,319.6 L908.0,318.6 L908.8,318.3 L909.5,316.7 L910.2,318.0 L911.0,319.4 L911.8,320.0 L912.5,318.3 L913.2,319.9 L914.0,319.4 L914.8,318.6 L915.5,318.0 L916.2,317.8 L917.0,318.6 L917.8,317.7 L918.5,319.2 L919.2,318.2 L920.0,318.8 L920.8,319.4 L921.5,319.6 L922.2,319.3 L923.0,318.4 L923.8,319.5 L924.5,318.2 L925.2,318.7 L926.0,319.0 L926.8,319.0 L927.5,318.8 L928.2,318.0 L929.0,319.1 L929.8,317.6 L930.5,318.0 L931.2,319.2 L932.0,319.7 L932.8,318.5 L933.5,318.2 L934.2,319.3 L935.0,318.1 L935.8,318.9 L936.5,319.4 L937.2,318.3 L938.0,320.0 L938.8,318.2 L939.5,317.1 L940.2,317.9 L941.0,320.5 L941.8,317.4 L942.5,314.0 L943.2,317.4 L944.0,316.9 L944.8,318.3 L945.5,318.0 L946.2,317.9 L947.0,317.5 L947.8,319.9 L948.5,319.1 L949.2,318.9 L950.0,317.2 L950.8,317.9 L951.5,317.6 L952.2,318.9 L953.0,317.2 L953.8,318.3 L954.5,319.8 L955.2,318.3 L956.0,319.3 L956.8,317.8 L957.5,319.1 L958.2,318.0 L959.0,317.7 L959.8,318.4 L960.5,317.8 L961.2,317.8 L962.0,318.4 L962.8,318.3 L963.5,318.1 L964.2,320.4 L965.0,318.0 L965.8,318.9 L966.5,318.8 L967.2,318.5 L968.0,319.5 L968.8,320.5 L969.5,316.1 L970.2,317.4 L971.0,318.1 L971.8,318.5 L972.5,319.0 L973.2,319.2 L974.0,319.3 L974.8,319.9 L975.5,319.3 L976.2,316.9 L977.0,318.7 L977.8,318.1 L978.5,317.6 L979.2,320.3 L980.0,318.0 L980.8,319.1 L981.5,318.4 L982.2,319.1 L983.0,319.9 L983.8,317.5 L984.5,317.7 L985.2,319.7 L986.0,318.2 L986.8,318.8 L987.5,319.8 L988.2,317.4 L989.0,317.6 L989.8,318.9 L990.5,319.7 L991.2,317.9 L992.0,318.7 L992.8,318.0 L993.5,316.8 L994.2,318.5 L995.0,318.4 L995.8,318.0 L996.5,317.3 L997.2,318.6 L998.0,318.2 L998.8,318.8 L999.5,318.2 L1000.2,318.4 L1001.0,318.3 L1001.8,318.6 L1002.5,318.2 L1003.2,318.9 L1004.0,318.5 L1004.8,318.7 L1005.5,319.1 L1006.2,319.4 L1007.0,318.7 L1007.8,318.2 L1008.5,318.6 L1009.2,318.1 L1010.0,317.2 L1010.8,319.7 L1011.5,318.0 L1012.2,318.5 L1013.0,318.4 L1013.8,318.0 L1014.5,318.1 L1015.2,318.9 L1016.0,318.7 L1016.8,318.2 L1017.5,318.3 L1018.2,319.7 L1019.0,317.9 L1019.8,318.3 L1020.5,319.1 L1021.2,319.7 L1022.0,319.2 L1022.8,319.1 L1023.5,318.4 L1024.2,318.7 L1025.0,319.3 L1025.8,319.3 L1026.5,319.5 L1027.2,317.8 L1028.0,318.9 L1028.8,319.3 L1029.5,318.7 L1030.2,318.3 L1031.0,318.1 L1031.8,317.1 L1032.5,319.8 L1033.2,318.5 L1034.0,319.0 L1034.8,318.2 L1035.5,318.2 L1036.2,319.0 L1037.0,318.2 L1037.8,317.9 L1038.5,318.5 L1039.2,318.1 L1040.0,317.4 L1040.8,317.3 L1041.5,317.7 L1042.2,318.5 L1043.0,317.0 L1043.8,317.8 L1044.5,317.7 L1045.2,317.3 L1046.0,317.9 L1046.8,316.7 L1047.5,318.0 L1048.2,319.6 L1049.0,317.5 L1049.8,319.1 L1050.5,318.7 L1051.2,319.3 L1052.0,317.9 L1052.8,318.7 L1053.5,319.0 L1054.2,317.7" stroke="#542488" stroke-width="1.4" fill="none"/>
</g>
<rect x="1080" y="99.5" width="6" height="7" fill="#5A1E8A"/>
<circle cx="1054.5" cy="643.5" r="4.5" fill="#0E8078" stroke="#033" stroke-width="0.8"/>
<rect x="30.5" y="639" width="7" height="7" fill="#fff" stroke="#222" stroke-width="1"/>
<path d="M34.5,510 L31,513.5 L34.5,517" stroke="#E8D030" stroke-width="1.3" fill="none"/>
</svg>
<div class="lab" style="right:1246px;top:311px;line-height:14px;text-align:right">500.0</div>
<div class="lab" style="right:1246px;top:366px;line-height:14px;text-align:right">400.0</div>
<div class="lab" style="right:1246px;top:420px;line-height:14px;text-align:right">300.0</div>
<div class="lab" style="right:1246px;top:474px;line-height:14px;text-align:right">200.0</div>
<div class="lab" style="right:1246px;top:528px;line-height:14px;text-align:right">100.0</div>
<div class="lab" style="right:1246px;top:582px;line-height:14px;text-align:right">0.0</div>
<div class="lab" style="right:1246px;top:636px;line-height:14px;text-align:right">-100.0</div>
<div class="ylab" style="top:95px;line-height:14px">4.0</div>
<div class="ylab" style="top:149px;line-height:14px">3.0</div>
<div class="ylab" style="top:203px;line-height:14px">2.0</div>
<div class="ylab" style="top:257px;line-height:14px">1.0</div>
<div class="ylab" style="top:312px;line-height:14px">0.0</div>
<div class="ylab" style="top:366px;line-height:14px">-1.0</div>
<div class="ylab" style="top:420px;line-height:14px">-2.0</div>
<div class="ylab" style="top:474px;line-height:14px">-3.0</div>
<div class="ylab" style="top:528px;line-height:14px">-4.0</div>
<div class="ylab" style="top:582px;line-height:14px">-5.0</div>
<div class="ylab" style="top:110px;line-height:14px">V</div>
<div style="left:14px;width:40px;text-align:center;top:649px;line-height:14px;font-size:10px;color:#333">478.4</div>
<div style="left:116px;width:40px;text-align:center;top:649px;line-height:14px;font-size:10px;color:#333">478.9</div>
<div style="left:218px;width:40px;text-align:center;top:649px;line-height:14px;font-size:10px;color:#333">479.4</div>
<div style="left:320px;width:40px;text-align:center;top:649px;line-height:14px;font-size:10px;color:#333">479.9</div>
<div style="left:422px;width:40px;text-align:center;top:649px;line-height:14px;font-size:10px;color:#333">480.4</div>
<div style="left:524px;width:40px;text-align:center;top:649px;line-height:14px;font-size:10px;color:#333">480.9</div>
<div style="left:626px;width:40px;text-align:center;top:649px;line-height:14px;font-size:10px;color:#333">481.4</div>
<div style="left:728px;width:40px;text-align:center;top:649px;line-height:14px;font-size:10px;color:#333">481.9</div>
<div style="left:830px;width:40px;text-align:center;top:649px;line-height:14px;font-size:10px;color:#333">482.4</div>
<div style="left:932px;width:40px;text-align:center;top:649px;line-height:14px;font-size:10px;color:#333">482.9</div>
<div style="left:1034px;width:40px;text-align:center;top:649px;line-height:14px;font-size:10px;color:#333">483.4</div>
<div style="left:2px;top:663px;width:33px;height:14px;background:#7474EE;border:2px solid #1a1aD0;color:#D8D8FF;font-size:9px;line-height:10px;text-align:center">x1.0</div>
<div style="left:37px;top:663px;font-size:10px;color:#333;line-height:14px">μs</div>
<div style="left:1055px;top:665px;width:29px;height:11px;background:#B593CF;color:#EBDDF5;font-size:9px;line-height:11px;text-align:center">x1.0</div>
<div style="left:3px;top:93px;width:373px;height:211px;background:#D9D9D9"></div>
<div style="left:5px;top:95px;width:368px;height:14px;background:#A0A0A0"></div>
<div style="left:5px;top:109px;width:368px;height:191px;background:#fff"></div>
<div style="left:6px;top:96px;font-size:10px;font-weight:bold;color:#fff;line-height:14px;letter-spacing:0px">Zoom Overview</div>
<div style="left:350px;top:103px;width:6px;height:2px;background:#fff"></div>
<svg style="position:absolute;left:362px;top:97px" width="10" height="10"><path d="M1,1 L9,9 M9,1 L1,9" stroke="#fff" stroke-width="1.6"/></svg>
<svg style="position:absolute;left:0;top:0" width="380" height="305">
<path d="M13.5,117.5 V296 M48.6,117.5 V296 M83.7,117.5 V296 M118.8,117.5 V296 M153.9,117.5 V296 M189.0,117.5 V296 M224.1,117.5 V296 M259.2,117.5 V296 M294.3,117.5 V296 M329.4,117.5 V296 M364.5,117.5 V296 M13.5,117.5 H364.5 M13.5,135.3 H364.5 M13.5,153.2 H364.5 M13.5,171.1 H364.5 M13.5,188.9 H364.5 M13.5,206.8 H364.5 M13.5,224.6 H364.5 M13.5,242.5 H364.5 M13.5,260.3 H364.5 M13.5,278.1 H364.5 M13.5,296.0 H364.5" stroke="#B9D5DC" stroke-width="1" stroke-dasharray="2.5,2.5" fill="none"/>
<path d="M14.0,296.0 L14.0,211.1 L15.5,210.5 L17.0,211.1 L18.5,211.4 L20.0,211.3 L21.5,210.9 L23.0,210.5 L24.5,211.5 L26.0,211.4 L27.5,211.0 L29.0,210.4 L30.5,210.4 L32.0,211.3 L33.5,210.5 L35.0,210.6 L36.5,211.5 L38.0,210.4 L39.5,210.7 L41.0,210.3 L42.5,211.1 L44.0,210.4 L45.5,211.2 L47.0,210.9 L48.5,210.9 L50.0,211.2 L51.5,210.2 L53.0,211.2 L54.5,210.4 L56.0,211.1 L57.5,211.2 L59.0,210.4 L60.5,211.2 L62.0,211.0 L63.5,210.5 L65.0,211.1 L66.5,210.4 L68.0,210.8 L69.5,211.5 L71.0,211.1 L72.5,210.4 L74.0,211.6 L75.5,211.4 L77.0,210.8 L78.5,210.5 L80.0,211.2 L81.5,210.2 L83.0,210.9 L84.5,210.3 L86.0,211.5 L87.5,210.6 L89.0,210.4 L90.5,210.6 L92.0,211.5 L93.5,210.4 L95.0,210.8 L96.5,211.0 L98.0,210.6 L99.5,211.0 L101.0,210.3 L102.5,210.9 L104.0,211.6 L105.5,210.9 L107.0,211.2 L108.5,210.7 L110.0,211.2 L111.5,210.6 L113.0,211.1 L114.5,211.5 L116.0,210.9 L117.5,211.3 L119.0,210.7 L120.5,210.7 L122.0,210.3 L123.5,210.6 L125.0,211.1 L126.5,211.2 L128.0,211.2 L129.5,211.1 L131.0,210.3 L132.5,211.2 L134.0,210.2 L135.5,210.8 L137.0,210.4 L138.5,210.7 L140.0,211.5 L141.5,210.9 L143.0,211.5 L144.5,211.2 L146.0,210.3 L147.5,211.2 L149.0,210.6 L150.5,211.1 L152.0,210.7 L153.5,211.1 L155.0,210.7 L156.5,210.5 L158.0,210.4 L159.5,211.5 L161.0,211.4 L162.5,210.6 L164.0,210.3 L165.5,210.4 L167.0,211.3 L168.5,211.5 L170.0,211.6 L171.5,210.8 L173.0,210.3 L174.5,210.5 L176.0,210.8 L177.5,211.2 L179.0,211.6 L180.5,211.0 L182.0,211.1 L183.5,210.4 L185.0,210.5 L186.5,210.4 L188.0,211.1 L189.5,210.8 L191.0,211.6 L192.5,211.4 L194.0,210.9 L195.5,210.5 L197.0,210.7 L198.5,210.2 L200.0,211.1 L201.5,211.4 L203.0,210.9 L204.5,210.4 L206.0,210.3 L207.5,210.3 L209.0,211.2 L210.5,211.4 L212.0,210.3 L213.5,210.2 L215.0,211.5 L216.5,210.4 L218.0,211.2 L219.5,210.7 L221.0,210.2 L222.5,211.3 L224.0,211.1 L225.5,211.0 L227.0,210.9 L228.5,211.0 L230.0,210.9 L231.5,210.8 L233.0,210.9 L234.5,211.1 L236.0,210.4 L237.5,210.8 L239.0,211.1 L240.5,210.3 L242.0,211.3 L243.5,211.2 L245.0,210.7 L246.5,211.1 L248.0,211.0 L249.5,210.8 L251.0,210.7 L252.5,211.1 L254.0,210.4 L255.5,211.4 L257.0,210.9 L258.5,211.1 L260.0,211.4 L261.5,210.5 L263.0,211.2 L264.5,211.2 L266.0,210.4 L267.5,211.0 L269.0,211.0 L270.5,211.5 L272.0,210.7 L273.5,210.5 L275.0,210.8 L276.5,210.6 L278.0,210.5 L279.5,211.6 L281.0,210.5 L282.5,211.2 L284.0,210.5 L285.5,211.4 L287.0,211.1 L288.5,210.5 L290.0,211.1 L291.5,211.2 L293.0,210.5 L294.5,210.8 L296.0,211.0 L297.5,211.2 L299.0,211.2 L300.5,211.5 L302.0,211.0 L303.5,211.4 L305.0,211.2 L306.5,211.3 L308.0,210.4 L309.5,210.9 L311.0,210.9 L312.5,211.4 L314.0,211.5 L315.5,211.1 L317.0,211.5 L318.5,210.9 L320.0,210.8 L321.5,211.2 L323.0,211.0 L324.5,211.6 L326.0,210.5 L327.5,210.9 L329.0,210.3 L330.5,210.7 L332.0,211.1 L333.5,210.8 L335.0,210.3 L336.5,210.3 L338.0,211.2 L339.5,211.5 L341.0,210.8 L342.5,210.4 L344.0,210.4 L345.5,211.5 L347.0,210.3 L348.5,211.6 L350.0,210.5 L351.5,210.4 L353.0,211.2 L354.5,210.7 L356.0,210.7 L357.5,211.4 L359.0,211.3 L360.5,211.2 L362.0,210.2 L363.5,210.6 L364.0,296.0Z" fill="#0000EE"/>
<path d="M14.0,190.0 L15.0,190.4 L16.0,189.7 L17.0,189.9 L18.0,189.4 L19.0,190.0 L20.0,189.8 L21.0,190.3 L22.0,189.8 L23.0,190.4 L24.0,190.8 L25.0,190.2 L26.0,190.0 L27.0,190.3 L28.0,190.0 L29.0,189.9 L30.0,190.4 L31.0,190.0 L32.0,190.1 L33.0,189.6 L34.0,190.2 L35.0,190.1 L36.0,190.5 L37.0,190.7 L38.0,190.4 L39.0,189.6 L40.0,190.2 L41.0,189.6 L42.0,190.0 L43.0,191.2 L44.0,190.0 L45.0,189.7 L46.0,189.9 L47.0,190.0 L48.0,190.4 L49.0,190.0 L50.0,189.9 L51.0,190.0 L52.0,190.1 L53.0,189.9 L54.0,189.6 L55.0,189.7 L56.0,189.5 L57.0,189.6 L58.0,190.5 L59.0,189.9 L60.0,189.8 L61.0,190.1 L62.0,190.4 L63.0,189.9 L64.0,189.7 L65.0,190.3 L66.0,189.9 L67.0,190.2 L68.0,189.8 L69.0,189.8 L70.0,190.2 L71.0,189.5 L72.0,189.8 L73.0,190.3 L74.0,190.3 L75.0,189.9 L76.0,189.8 L77.0,190.3 L78.0,190.0 L79.0,190.3 L80.0,190.3 L81.0,189.7 L82.0,189.6 L83.0,189.6 L84.0,190.2 L85.0,190.3 L86.0,191.0 L87.0,190.4 L88.0,189.7 L89.0,190.4 L90.0,189.8 L91.0,189.9 L92.0,189.8 L93.0,189.3 L94.0,190.1 L95.0,189.9 L96.0,190.1 L97.0,190.4 L98.0,189.9 L99.0,189.9 L100.0,190.2 L101.0,189.4 L102.0,190.0 L103.0,190.6 L104.0,190.1 L105.0,190.1 L106.0,190.3 L107.0,189.9 L108.0,189.6 L109.0,190.5 L110.0,190.0 L111.0,190.7 L112.0,189.9 L113.0,189.7 L114.0,189.9 L115.0,189.5 L116.0,190.5 L117.0,189.6 L118.0,189.3 L119.0,190.0 L120.0,190.4 L121.0,188.9 L122.0,190.1 L123.0,190.2 L124.0,190.4 L125.0,189.7 L126.0,189.7 L127.0,190.2 L128.0,190.1 L129.0,189.2 L130.0,189.8 L131.0,189.9 L132.0,189.9 L133.0,189.7 L134.0,189.5 L135.0,189.8 L136.0,190.1 L137.0,190.0 L138.0,190.3 L139.0,190.7 L140.0,189.7 L141.0,189.8 L142.0,189.8 L143.0,190.3 L144.0,190.5 L145.0,189.9 L146.0,189.9 L147.0,189.2 L148.0,190.2 L149.0,189.7 L150.0,190.3 L151.0,190.7 L152.0,189.4 L153.0,189.8 L154.0,189.8 L155.0,189.8 L156.0,190.1 L157.0,190.0 L158.0,189.3 L159.0,190.2 L160.0,189.9 L161.0,190.4 L162.0,190.2 L163.0,190.2 L164.0,190.2 L165.0,190.1 L166.0,190.1 L167.0,190.0 L168.0,190.2 L169.0,189.6 L170.0,190.0 L171.0,190.0 L172.0,189.9 L173.0,190.5 L174.0,190.3 L175.0,190.0 L176.0,190.3 L177.0,190.1 L178.0,190.1 L179.0,189.9 L180.0,189.5 L181.0,190.0 L182.0,190.1 L183.0,189.8 L184.0,190.4 L185.0,189.5 L186.0,190.4 L187.0,190.3 L188.0,190.2 L189.0,189.0 L190.0,189.3 L191.0,190.5 L192.0,190.1 L193.0,189.9 L194.0,189.8 L195.0,190.5 L196.0,189.9 L197.0,190.3 L198.0,189.8 L199.0,189.4 L200.0,190.0 L201.0,190.1 L202.0,190.1 L203.0,190.4 L204.0,190.2 L205.0,189.7 L206.0,189.8 L207.0,190.2 L208.0,189.7 L209.0,189.4 L210.0,190.6 L211.0,190.8 L212.0,189.8 L213.0,189.9 L214.0,189.5 L215.0,189.6 L216.0,189.9 L217.0,190.0 L218.0,189.7 L219.0,189.6 L220.0,189.5 L221.0,189.8 L222.0,189.7 L223.0,189.9 L224.0,189.7 L225.0,189.9 L226.0,190.0 L227.0,190.4 L228.0,190.5 L229.0,190.4 L230.0,190.2 L231.0,190.0 L232.0,189.8 L233.0,189.7 L234.0,190.8 L235.0,189.9 L236.0,189.9 L237.0,189.9 L238.0,189.8 L239.0,189.9 L240.0,190.0 L241.0,189.7 L242.0,189.5 L243.0,189.6 L244.0,190.6 L245.0,189.6 L246.0,190.4 L247.0,189.5 L248.0,189.7 L249.0,189.9 L250.0,189.9 L251.0,189.6 L252.0,190.2 L253.0,189.8 L254.0,190.6 L255.0,189.6 L256.0,189.8 L257.0,190.2 L258.0,190.0 L259.0,189.9 L260.0,190.0 L261.0,189.9 L262.0,190.3 L263.0,189.3 L264.0,189.9 L265.0,189.7 L266.0,190.0 L267.0,190.3 L268.0,190.3 L269.0,189.8 L270.0,189.6 L271.0,189.4 L272.0,190.1 L273.0,190.0 L274.0,189.9 L275.0,189.7 L276.0,189.8 L277.0,190.2 L278.0,189.7 L279.0,190.1 L280.0,190.3 L281.0,189.7 L282.0,190.6 L283.0,189.9 L284.0,189.2 L285.0,190.1 L286.0,190.1 L287.0,189.1 L288.0,190.2 L289.0,190.2 L290.0,190.0 L291.0,190.0 L292.0,190.2 L293.0,189.8 L294.0,189.8 L295.0,190.4 L296.0,190.2 L297.0,189.9 L298.0,190.6 L299.0,190.2 L300.0,190.3 L301.0,189.5 L302.0,190.6 L303.0,190.2 L304.0,189.7 L305.0,190.1 L306.0,190.5 L307.0,190.6 L308.0,189.7 L309.0,189.4 L310.0,190.4 L311.0,190.6 L312.0,190.2 L313.0,190.2 L314.0,189.7 L315.0,190.0 L316.0,190.0 L317.0,189.6 L318.0,189.7 L319.0,190.2 L320.0,189.7 L321.0,189.6 L322.0,189.7 L323.0,190.2 L324.0,190.4 L325.0,189.7 L326.0,190.1 L327.0,190.5 L328.0,190.2 L329.0,190.0 L330.0,189.6 L331.0,189.7 L332.0,189.8 L333.0,189.5 L334.0,190.7 L335.0,190.2 L336.0,190.2 L337.0,190.1 L338.0,190.9 L339.0,189.8 L340.0,190.0 L341.0,190.0 L342.0,190.1 L343.0,190.4 L344.0,189.7 L345.0,189.7 L346.0,190.4 L347.0,190.0 L348.0,190.5 L349.0,189.3 L350.0,190.8 L351.0,190.4 L352.0,190.6 L353.0,189.3 L354.0,190.0 L355.0,190.1 L356.0,190.0 L357.0,189.9 L358.0,189.9 L359.0,190.9 L360.0,190.0 L361.0,190.1 L362.0,190.2 L363.0,189.2 L364.0,190.0" stroke="#5E2E86" stroke-width="3" fill="none"/>
<rect x="203" y="118" width="2" height="178" fill="#A4A4A4"/>
<path d="M198,207 H210 M198,205 V209 M210,205 V209" stroke="#888" stroke-width="1"/>
<circle cx="35" cy="253.5" r="1.5" fill="#FFF080"/>
</svg>
<div style="left:1088px;top:91px;width:192px;height:602px;background:#5A5A5A"></div>
<div style="left:1088px;top:93px;width:190px;height:598px;background:#fff"></div>
<div style="left:1088px;top:91px;width:190px;height:20px;background:#465A84;border-top:1px solid #34445F"></div>
<div style="left:1094px;top:94px;font-size:10.5px;font-weight:bold;color:#fff;line-height:17px;letter-spacing:-0.2px">Properties</div>
<svg style="position:absolute;left:1265px;top:96px" width="10" height="10"><path d="M1,1 L9,9 M9,1 L1,9" stroke="#fff" stroke-width="1.6"/></svg>
<div class="prow" style="top:116px">Sample interval<b>400 ps</b></div>
<div class="prow" style="top:133px">Sample rate<b>2.5 GS/s</b></div>
<div class="prow" style="top:150px">No. samples<b>2,500,000</b></div>
<div class="prow" style="top:166px">Hardware<b></b></div>
<div class="prow" style="top:179px">Resolution<b></b></div>
<div class="prow" style="top:172px"><b>10 bits</b></div>
<div class="prow" style="top:313px">Signal type<b>Arbitrary (AWG)</b></div>
<div class="prow" style="top:330px">Frequency<b>5 Hz</b></div>
<div class="prow" style="top:347px">Amplitude<b>2.5 V</b></div>
<div class="prow" style="top:363px">Offset<b>0 V</b></div>
<div class="prow" style="top:384px">Digital Channels<b></b></div>
<div class="prow" style="top:402px">1D0 to 1D7<b>Off</b></div>
<div class="prow" style="top:419px">2D0 to 2D7<b>Off</b></div>
<div class="prow" style="top:440px">Δ First Trigger<b>748.076ms</b></div>
<div class="prow" style="top:458px">Δ Previous Trigger<b>53.258ms</b></div>
<div class="prow" style="top:481px">Capture Date<b>22/11/2019</b></div>
<div class="prow" style="top:498px">Capture Time<b>16:49:32</b></div>
<div style="left:1094px;top:200px;width:165px;height:51px;border:1px solid #4A4AD0"></div>
<div style="left:1094px;top:257px;width:165px;height:51px;border:1px solid #8A62A8"></div>
<div class="prow" style="left:1098px;width:157px;top:202px">Channel<b>A</b></div>
<div class="prow" style="left:1098px;width:157px;top:219px">Range<b>±500 mV</b></div>
<div class="prow" style="left:1098px;width:157px;top:235px">Coupling<b>DC</b></div>
<div class="prow" style="left:1098px;width:157px;top:259px">Channel<b>E</b></div>
<div class="prow" style="left:1098px;width:157px;top:275px">Range<b>±5 V</b></div>
<div class="prow" style="left:1098px;width:157px;top:292px">Coupling<b>DC</b></div>
<div style="left:0;top:693px;width:1280px;height:27px;background:linear-gradient(#F6F3EE,#ECE8E0);border-bottom:2px solid #5A5A5A;border-right:2px solid #6A6A6A"></div>
<div style="left:8px;top:699px;font-size:10.5px;color:#222;line-height:14px">Stopped</div>
<svg style="position:absolute;left:59px;top:700px" width="8" height="11"><path d="M0,0 L8,5.5 L0,11Z" fill="#2E9A3A"/></svg>
<div style="left:73px;top:695px;width:22px;height:22px;background:linear-gradient(#B5DCFB,#8EC8F5);border:1px solid #A9D2F2"></div>
<div style="left:79px;top:701px;width:10px;height:10px;background:#E01818"></div>
<div class="vsep" style="left:96px;top:696px;height:21px"></div>
<div style="left:101px;top:699px;font-size:10.5px;color:#222;line-height:14px">Trigger</div>
<div class="box" style="left:141px;top:696px;width:63px;height:21px;border:1px solid #D8D2C8;color:#222;line-height:19px">Auto<i class="dd" style="top:8px"></i></div>
<svg style="position:absolute;left:209px;top:698px" width="16" height="16"><rect x="5.5" y="6" width="4.5" height="8" fill="#B8D4F4"/><path d="M1,11.5 L4,11.5 L4,4 L8,4 L8,11.5 L14,11.5" stroke="#222" stroke-width="1.3" fill="none"/><path d="M8,6 L8,11" stroke="#30B040" stroke-width="1.5"/><path d="M9,1 L15,1 L15,7Z" fill="#111"/></svg>
<div class="vsep" style="left:229px;top:696px;height:21px"></div>
<div class="box" style="left:236px;top:696px;width:57px;height:21px;border:1px solid #D8D2C8;color:#333;line-height:19px;font-weight:bold">A<i class="dd" style="top:8px"></i></div>
<div class="vsep" style="left:297px;top:696px;height:21px"></div>
<div style="left:300px;top:695px;width:22px;height:22px;background:linear-gradient(#B5DCFB,#8EC8F5);border:1px solid #A9D2F2"></div>
<svg style="position:absolute;left:304px;top:699px" width="14" height="14"><path d="M1,12.5 L3,12.5 L11,2 L13.5,2" stroke="#223" stroke-width="1.2" fill="none"/><path d="M4.5,4.5 L6.5,1.5 L8.5,4.5Z M4.5,9 L6.5,12 L8.5,9Z" fill="#2040E0"/></svg>
<svg style="position:absolute;left:326px;top:699px" width="14" height="14"><path d="M1,1.5 L3,1.5 L11,12 L13.5,12" stroke="#223" stroke-width="1.2" fill="none"/><path d="M5,4.5 L7,1.5 L9,4.5Z M5,9 L7,12 L9,9Z" fill="#2040E0"/></svg>
<div class="vsep" style="left:345px;top:696px;height:21px"></div>
<div class="grp" style="left:353px;top:695px;width:90px;height:22px"></div><div class="btn" style="left:353px;top:695px;width:21px;height:22px"><i class="al"></i></div><div class="box" style="left:374px;top:695px;width:48px;height:22px;color:#222;"><span style="position:static;margin-left:-2px;letter-spacing:-0.3px;font-size:10px">139.3 mV</span></div><div class="btn" style="left:422px;top:695px;width:21px;height:22px"><i class="ar"></i></div>
<div class="vsep" style="left:446px;top:696px;height:21px"></div>
<div class="grp" style="left:454px;top:695px;width:90px;height:22px"></div><div class="btn" style="left:454px;top:695px;width:21px;height:22px"><i class="al"></i></div><div class="box" style="left:475px;top:695px;width:49px;height:22px;color:#222;">6.153 %</div><div class="btn" style="left:524px;top:695px;width:20px;height:22px"><i class="ar"></i></div>
<svg style="position:absolute;left:549px;top:698px" width="16" height="16"><path d="M1,3 L8,3 L15,14" stroke="#222" stroke-width="1.1" fill="none"/><path d="M2,9 C5,2 8,8 13,12" stroke="#3050D0" stroke-width="1.2" fill="none"/><circle cx="12" cy="6" r="2" fill="#60C040"/></svg>
<div class="grp" style="left:571px;top:695px;width:92px;height:22px"></div><div class="btn dis" style="left:571px;top:695px;width:22px;height:22px"><i class="al"></i></div><div class="box" style="background:#F3F1EC;left:593px;top:695px;width:50px;height:22px;color:#bbb;"><span style="color:#C8C8C8;position:static">0 s</span></div><div class="btn dis" style="left:643px;top:695px;width:20px;height:22px"><i class="ar"></i></div>
<div class="vsep" style="left:665px;top:696px;height:21px"></div>
<div style="left:671px;top:699px;font-size:10.5px;color:#222;line-height:14px;letter-spacing:-0.2px">Measurements</div>
<div style="left:743px;top:698px;width:15px;height:15px;background:linear-gradient(#48B850,#238A30);border:1px solid #5A9A60;border-radius:1px"></div><div style="left:746px;top:704px;width:8px;height:2px;background:#fff"></div><div style="left:749px;top:701px;width:2px;height:8px;background:#fff"></div>
<div style="left:765px;top:698px;width:15px;height:15px;background:linear-gradient(#D4E4CC,#C4D8BC);border:1px solid #D0DCC8;border-radius:1px"></div><div style="left:768px;top:704px;width:8px;height:2px;background:#fff"></div>
<div style="left:787px;top:698px;width:15px;height:15px;background:linear-gradient(#D4E4CC,#C4D8BC);border:1px solid #D0DCC8;border-radius:1px"></div><svg style="position:absolute;left:789px;top:701px" width="10" height="8"><path d="M0,7 L5,1 L10,7Z" fill="#fff"/></svg>
<div class="vsep" style="left:806px;top:696px;height:21px"></div>
<div style="left:812px;top:699px;font-size:10.5px;color:#222;line-height:14px">Rulers</div>
<div style="left:846px;top:698px;width:15px;height:15px;background:linear-gradient(#48B850,#238A30);border:1px solid #5A9A60;border-radius:1px"></div><svg style="position:absolute;left:848px;top:701px" width="10" height="8"><path d="M0,7 L5,1 L10,7Z" fill="#fff"/></svg>
<div style="left:866px;top:699px;font-size:10.5px;color:#222;line-height:14px">Notes</div>
<div style="left:898px;top:698px;width:15px;height:15px;background:linear-gradient(#48B850,#238A30);border:1px solid #5A9A60;border-radius:1px"></div><svg style="position:absolute;left:900px;top:701px" width="10" height="8"><path d="M0,7 L5,1 L10,7Z" fill="#fff"/></svg>
</body></html>
